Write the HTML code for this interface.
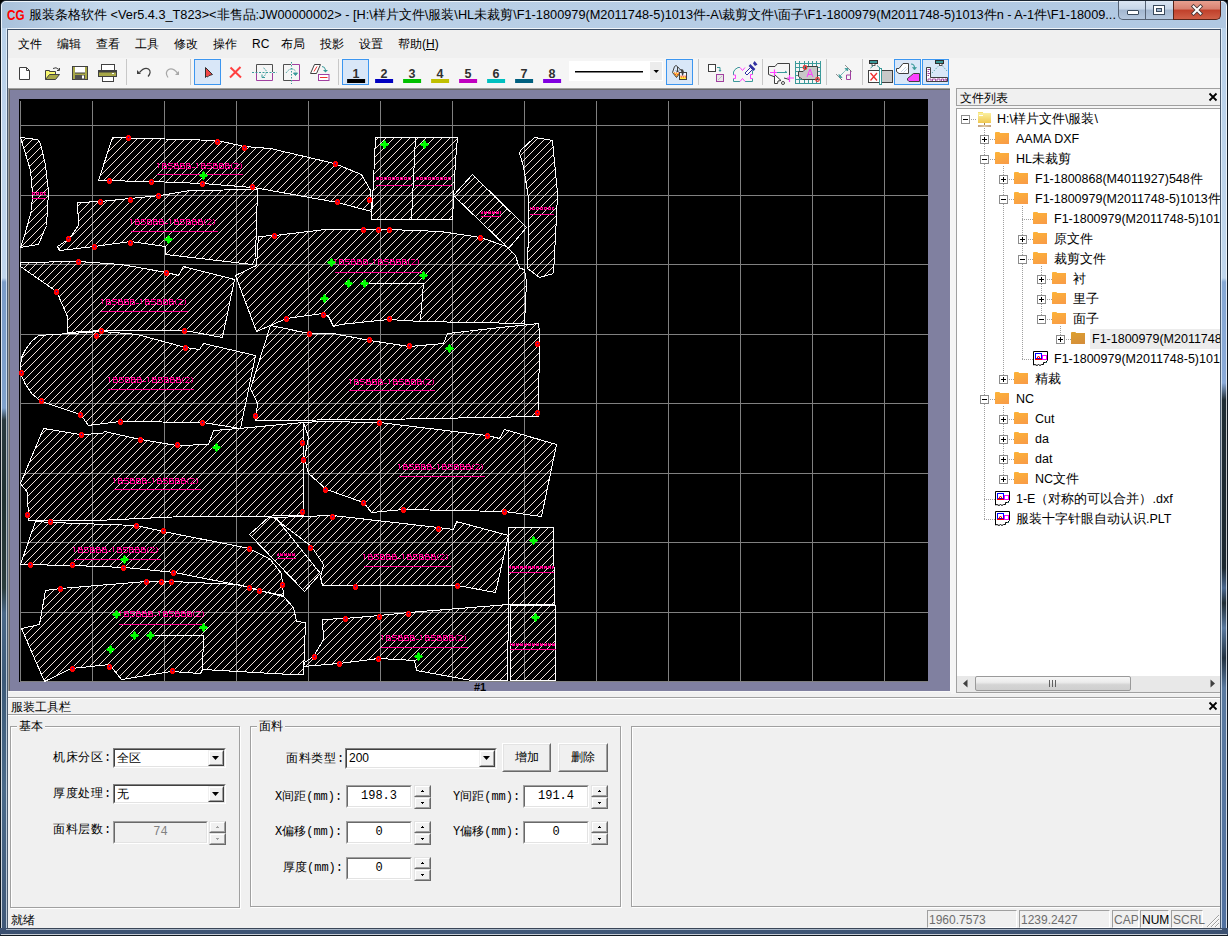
<!DOCTYPE html><html><head><meta charset="utf-8"><style>
*{box-sizing:border-box}
body{margin:0;width:1228px;height:936px;position:relative;overflow:hidden;font-family:"Liberation Sans",sans-serif;font-size:12px;color:#000;background:#000}
.a{position:absolute}
.t{position:absolute;white-space:nowrap;line-height:14px}
</style></head><body><div class="a" style="left:0;top:0;width:1228px;height:936px;background:linear-gradient(#b9d1ea 0px,#bcd3ea 30px,#9cb4cc 200px,#2f4a4a 400px,#405e78 700px,#3b5070 936px);border:1px solid #1a2430;border-radius:6px 6px 0 0"></div><div class="a" style="left:1px;top:1px;width:1226px;height:934px;border:1px solid rgba(255,255,255,0.75);border-radius:5px 5px 0 0"></div><div class="a" style="left:2px;top:2px;width:1224px;height:27px;background:linear-gradient(90deg,#a9c1db 0%,#c4d8ec 8%,#b9cfe6 40%,#b0c8e2 100%);border-radius:4px 4px 0 0"></div><div class="a" style="left:6px;top:28px;width:1216px;height:902px;border:1px solid rgba(255,255,255,0.8)"></div><div class="a" style="left:7px;top:29px;width:1214px;height:900px;border:1px solid #3c4e66"></div><div class="t" style="left:7px;top:7px;font-weight:bold;color:#f00;font-size:15px;line-height:16px;letter-spacing:0px;transform:scaleX(0.78);transform-origin:0 0">CG</div><div class="t" style="left:29px;top:8px;font-size:12.75px;color:#000;width:1092px;overflow:hidden">服装条格软件 &lt;Ver5.4.3_T823&gt;&lt;非售品:JW00000002&gt; - [H:\样片文件\服装\HL未裁剪\F1-1800979(M2011748-5)1013件-A\裁剪文件\面子\F1-1800979(M2011748-5)1013件n - A-1件\F1-18009...</div><div class="a" style="left:1118px;top:1px;width:56px;height:19px;border:1px solid #556274;border-top:none;border-radius:0 0 0 5px;background:linear-gradient(#dbe6f3 0,#c7d6e8 45%,#a3b7d0 50%,#b5c8de 100%)"></div><div class="a" style="left:1145px;top:1px;width:1px;height:18px;background:#556274"></div><div class="a" style="left:1127px;top:10px;width:12px;height:5px;background:#fff;border:1px solid #3a4a5c;border-radius:1px"></div><div class="a" style="left:1153px;top:5px;width:12px;height:10px;background:#fff;border:1px solid #3a4a5c"></div><div class="a" style="left:1156px;top:8px;width:6px;height:4px;background:#a3b7d0;border:1px solid #3a4a5c"></div><div class="a" style="left:1173px;top:1px;width:48px;height:19px;border:1px solid #5a2418;border-top:none;border-radius:0 0 5px 0;background:linear-gradient(#e8a090 0,#d88070 45%,#c0402a 50%,#d06048 100%)"></div><svg class="a" style="left:1190px;top:4px" width="14" height="12"><path d="M3.5 2.5 L10.5 9.5 M10.5 2.5 L3.5 9.5" stroke="#4a3a3a" stroke-width="3.8" stroke-linecap="square"/><path d="M3.5 2.5 L10.5 9.5 M10.5 2.5 L3.5 9.5" stroke="#fff" stroke-width="2" stroke-linecap="square"/></svg><div class="a" style="left:8px;top:30px;width:1212px;height:898px;background:#f0f0f0"></div><div class="t" style="left:18px;top:37px;font-size:12px">文件</div><div class="t" style="left:57px;top:37px;font-size:12px">编辑</div><div class="t" style="left:96px;top:37px;font-size:12px">查看</div><div class="t" style="left:135px;top:37px;font-size:12px">工具</div><div class="t" style="left:174px;top:37px;font-size:12px">修改</div><div class="t" style="left:213px;top:37px;font-size:12px">操作</div><div class="t" style="left:252px;top:37px;font-size:12px">RC</div><div class="t" style="left:281px;top:37px;font-size:12px">布局</div><div class="t" style="left:320px;top:37px;font-size:12px">投影</div><div class="t" style="left:359px;top:37px;font-size:12px">设置</div><div class="t" style="left:398px;top:37px;font-size:12px">帮助(<u>H</u>)</div><div class="a" style="left:8px;top:58px;width:1212px;height:30px;background:#f5f5f5"></div><svg class="a" style="left:0;top:0" width="960" height="90"><rect x="194.5" y="59.5" width="26" height="25" fill="#d9e7f8" stroke="#3c96f0" stroke-width="1"/><rect x="342.5" y="59.5" width="26" height="25" fill="#d9e7f8" stroke="#3c96f0" stroke-width="1"/><rect x="666.5" y="59.5" width="26" height="25" fill="#d9e7f8" stroke="#3c96f0" stroke-width="1"/><rect x="894.5" y="59.5" width="26" height="25" fill="#d9e7f8" stroke="#3c96f0" stroke-width="1"/><rect x="922.5" y="59.5" width="26" height="25" fill="#d9e7f8" stroke="#3c96f0" stroke-width="1"/><rect x="126" y="59" width="1" height="26" fill="#c8c8c8"/><rect x="190" y="59" width="1" height="26" fill="#c8c8c8"/><rect x="338" y="59" width="1" height="26" fill="#c8c8c8"/><rect x="698" y="59" width="1" height="26" fill="#c8c8c8"/><rect x="762" y="59" width="1" height="26" fill="#c8c8c8"/><rect x="826" y="59" width="1" height="26" fill="#c8c8c8"/><rect x="862" y="59" width="1" height="26" fill="#c8c8c8"/><path d="M19.5,67.5 H26.5 L29.5,70.5 V79.5 H19.5 Z" fill="#fff" stroke="#404040"/><path d="M26.5,67.5 V70.5 H29.5" fill="none" stroke="#404040"/><path d="M45.5,79.5 V70.5 H49.5 V71.5 H55.5 V74" fill="#f8f870" stroke="#404040"/><path d="M45.5,79.5 L49.5,74.5 H59.5 L55.5,79.5 Z" fill="#a8a848" stroke="#404040"/><path d="M53,68.5 Q56,66.5 59,69.5" fill="none" stroke="#404040"/><path d="M57,70.5 H59.5 V68" fill="none" stroke="#404040"/><rect x="72.5" y="66.5" width="15" height="13" fill="#a8a848" stroke="#404040"/><rect x="75" y="67" width="10" height="6" fill="#fff"/><rect x="75" y="72.5" width="10" height="1" fill="#404040"/><rect x="75" y="75" width="10" height="4.5" fill="#505050"/><rect x="82" y="75.5" width="2" height="3" fill="#fff"/><rect x="101.5" y="64.5" width="13" height="6" fill="#fff" stroke="#404040"/><rect x="98.5" y="70.5" width="18" height="6" fill="#a8a848" stroke="#404040"/><rect x="99" y="71" width="17" height="1.5" fill="#404040"/><rect x="112" y="73" width="2" height="1" fill="#fff"/><rect x="102.5" y="76.5" width="11" height="5" fill="#fff" stroke="#404040"/><path d="M139.5,72.5 Q144,67 148.5,69 Q152,72 148,76.5" fill="none" stroke="#404040" stroke-width="1.2"/><path d="M137,70 V74 H141 Z" fill="#404040"/><path d="M177.5,73 Q173,67.5 168.5,69.5 Q164.5,72.5 168,77.5" fill="none" stroke="#a8a8a8" stroke-width="1.2"/><path d="M179,71 V75 H175 Z" fill="#a8a8a8"/><path d="M205.5,67.5 L212.5,74.5 L209,75.5 L207.5,77 L206.5,76.5 L205.5,77.5 Z" fill="#f04848" stroke="#303030"/><path d="M230.5,67.5 L241,77.5 M240.5,67 L230,77.5" stroke="#ff4040" stroke-width="2"/><path d="M256.5,72 V64.5 H272.5 V72" fill="none" stroke="#505050"/><path d="M256.5,73 V80.5 H272.5 V73" fill="none" stroke="#a040a0"/><path d="M252,72.5 H277" stroke="#3a9a9a" stroke-dasharray="2,1.5"/><path d="M263.5,68 Q267,70 266,73 Q265,76 263,77" fill="none" stroke="#3a9a9a" stroke-dasharray="1.5,1"/><path d="M262,74.5 V77.5 H265" fill="none" stroke="#3a9a9a"/><path d="M291,64.5 H283.5 V80.5 H291" fill="none" stroke="#505050"/><path d="M292,64.5 H299.5 V80.5 H292" fill="none" stroke="#a040a0"/><path d="M291.5,62 V84" stroke="#3a9a9a" stroke-dasharray="1.5,1.5"/><path d="M286,73 Q291,66 295.5,71" fill="none" stroke="#3a9a9a" stroke-dasharray="1.5,1"/><path d="M293.5,73 H297.5 L295.5,75.5 Z" fill="#3a9a9a" stroke="#3a9a9a"/><path d="M314.5,64.5 H320.5 L316.5,73.5 H310.5 Z" fill="#fff" stroke="#404040"/><path d="M317,66.5 L314,71.5" stroke="#f03030"/><rect x="318.5" y="74.5" width="10.5" height="6" fill="#fff" stroke="#a040a0"/><rect x="320" y="77" width="7.5" height="1" fill="#f03030"/><path d="M322,66.5 Q325,66.5 325.5,70" fill="none" stroke="#3a9a9a"/><path d="M323,70 H328 L325.5,72.5 Z" fill="#3a9a9a"/><text x="356.1" y="77.5" text-anchor="middle" font-family="Liberation Sans" font-weight="bold" font-size="12.5" fill="#303030">1</text><rect x="347.1" y="79" width="18" height="4" fill="#000000"/><text x="384.1" y="77.5" text-anchor="middle" font-family="Liberation Sans" font-weight="bold" font-size="12.5" fill="#303030">2</text><rect x="375.1" y="79" width="18" height="4" fill="#0000c0"/><text x="412.1" y="77.5" text-anchor="middle" font-family="Liberation Sans" font-weight="bold" font-size="12.5" fill="#303030">3</text><rect x="403.1" y="79" width="18" height="4" fill="#00c000"/><text x="440.1" y="77.5" text-anchor="middle" font-family="Liberation Sans" font-weight="bold" font-size="12.5" fill="#303030">4</text><rect x="431.1" y="79" width="18" height="4" fill="#c0c000"/><text x="468.1" y="77.5" text-anchor="middle" font-family="Liberation Sans" font-weight="bold" font-size="12.5" fill="#303030">5</text><rect x="459.1" y="79" width="18" height="4" fill="#c000c0"/><text x="496.1" y="77.5" text-anchor="middle" font-family="Liberation Sans" font-weight="bold" font-size="12.5" fill="#303030">6</text><rect x="487.1" y="79" width="18" height="4" fill="#00c0c0"/><text x="524.1" y="77.5" text-anchor="middle" font-family="Liberation Sans" font-weight="bold" font-size="12.5" fill="#303030">7</text><rect x="515.1" y="79" width="18" height="4" fill="#006080"/><text x="552.1" y="77.5" text-anchor="middle" font-family="Liberation Sans" font-weight="bold" font-size="12.5" fill="#303030">8</text><rect x="543.1" y="79" width="18" height="4" fill="#8000e0"/><rect x="569" y="61" width="94" height="20" fill="#fff"/><rect x="575" y="71" width="68" height="1.5" fill="#000"/><rect x="650" y="62" width="12" height="18" fill="#ececec"/><path d="M653.5,70 H659 L656.25,73 Z" fill="#000"/><path d="M672.5,72.5 L680.5,73 L676.5,77.5 Z" fill="#ffe840"/><path d="M674,73 h1 M676,73 h1 M678,73 h1 M675,74.5 h1 M677,74.5 h1 M676,76 h1" stroke="#ff3030"/><path d="M672.5,72.5 L674.5,66.5 Q676,64.5 677.5,66.5 L680.5,70 M672.5,72.5 L676.5,77.5 L680,73" fill="none" stroke="#404040" stroke-width="1"/><path d="M677.5,67 V72 M676,70.5 L677.5,72 L679,70.5" fill="none" stroke="#404040"/><rect x="679.5" y="72.5" width="7" height="7" fill="#eef6ff" stroke="#404040"/><path d="M680,76.5 h6 v2.5 h-6 Z" fill="#ffe840"/><path d="M680.5,76 h1 M682.5,76 h1 M684.5,76 h1 M681,77 h1 M683,77 h1 M685,77 h1" stroke="#ff3030"/><path d="M680,69 L683,69.5 L684,72 L683,75.5 L682,75.5 L681.5,72 Z" fill="#404040"/><rect x="708.5" y="64.5" width="7" height="7" fill="#fff" stroke="#404040"/><path d="M717,67.5 H720 V71" fill="none" stroke="#3a9a9a"/><path d="M718.5,70 H721.5 L720,72 Z" fill="#3a9a9a"/><rect x="716.5" y="74.5" width="7" height="7" fill="#e8e8e8" stroke="#a040a0"/><path d="M718,80 L722,76" stroke="#c0c0c0"/><path d="M733.5,81.5 H740 M745,81.5 H752.5 V78.5 M752.5,74.5 V71 L750,68 M740,67.5 H738 L735,69.5 L733.5,72 V75 M733.5,78.5 V81.5" fill="none" stroke="#3a9a9a"/><path d="M740,67.5 L742.5,70.5 L745,67.5 M740,81.5 L742.5,78.5 L745,81.5 M733.5,75 H735.5 V78.5 H733.5 M752.5,74.5 H750.5 V78.5 H752.5" fill="none" stroke="#ff40ff"/><path d="M745,73 L750.5,67.5 L752.5,69.5 L747,75 Z" fill="#fff" stroke="#3030a0"/><path d="M749.5,65 L754.5,70" stroke="#3030a0" stroke-width="2.5"/><path d="M753,63.5 L754.5,61 L757.5,64.5 L755,66 Z" fill="#3030a0"/><path d="M777.5,63.5 H789.5 V79.5 L784,78 M777.5,63.5 L775,66.5 H768.5 V74.5 L775,77" fill="none" stroke="#404040"/><path d="M770,72.5 H787 M785,71 L787,72.5" fill="none" stroke="#3a9a9a"/><path d="M774.5,74.5 L781,80.5 L778,81 L777.5,83.5 L774.5,83.5 Z" fill="#fff" stroke="#404040"/><circle cx="783" cy="83" r="1.5" fill="#fff" stroke="#404040"/><path d="M770,72.5 H777 M774.5,69.5 V76 M787,78 H794 M789.5,75 V82" stroke="#ff40ff" stroke-width="1.2"/><rect x="795" y="61" width="1" height="23" fill="#3a9a9a"/><rect x="799" y="61" width="1" height="23" fill="#3a9a9a"/><rect x="804" y="61" width="1" height="23" fill="#3a9a9a"/><rect x="808" y="61" width="1" height="23" fill="#3a9a9a"/><rect x="812" y="61" width="1" height="23" fill="#3a9a9a"/><rect x="816" y="61" width="1" height="23" fill="#3a9a9a"/><rect x="820" y="61" width="1" height="23" fill="#3a9a9a"/><rect x="795" y="63" width="26" height="1" fill="#3a9a9a"/><rect x="795" y="67" width="26" height="1" fill="#3a9a9a"/><rect x="795" y="71" width="26" height="1" fill="#3a9a9a"/><rect x="795" y="75" width="26" height="1" fill="#3a9a9a"/><rect x="795" y="79" width="26" height="1" fill="#3a9a9a"/><rect x="795" y="83" width="26" height="1" fill="#3a9a9a"/><path d="M805.5,66.5 H817.5 V79.5 H802.5 L798.5,76.5 V71.5 H803 L805.5,69 Z" fill="#c8c8c8" stroke="#404040"/><path d="M807,77 L810,69 L813,77 M808,74.5 H812" fill="none" stroke="#ff40ff"/><circle cx="805" cy="67.5" r="1.8" fill="none" stroke="#f03030" stroke-width="1.2"/><circle cx="817.5" cy="79.5" r="1.8" fill="none" stroke="#f03030" stroke-width="1.2"/><path d="M836.5,74.5 L842,80 M845.5,65.5 L851.5,71.5" stroke="#303030" stroke-dasharray="1,0.6"/><path d="M840,76 L847,69" stroke="#3a9a9a" stroke-dasharray="1,0.6"/><path d="M839,74.5 L839.5,77.5 L842,77.5 Z M848,68.5 L845,68.5 L847.5,71 Z" fill="#3a9a9a" stroke="#3a9a9a" stroke-width="0.8"/><path d="M850.5,71 V79.5 H846.5 V75 H850.5" fill="none" stroke="#a040a0"/><rect x="869.5" y="60.5" width="8" height="3" fill="#3a9a9a" stroke="#303030"/><rect x="872" y="63.5" width="3" height="2" fill="#fff" stroke="#303030" stroke-width="0.8"/><path d="M870.5,68 L873.5,65.5 M877,65.5 L880,68" stroke="#3a9a9a"/><rect x="868.5" y="70.5" width="24" height="12" fill="#c8c8c8" stroke="#404040"/><rect x="869" y="71" width="10" height="11" fill="#fff"/><path d="M870.5,73 L877,80.5 M877,73 L870.5,80.5" stroke="#f03030" stroke-width="1.3"/><rect x="879.5" y="68.5" width="2" height="16" fill="#fff" stroke="#3a9a9a"/><path d="M896.5,68.5 H899 L903,63.5 H908.5 V73.5 H899 L896.5,71.5 Z" fill="#fff" stroke="#404040"/><path d="M901,72 L906,67 M903.5,72.5 L907.5,68.5" stroke="#c8d8e8"/><path d="M911,64 Q914.5,64 914.5,68" fill="none" stroke="#3a9a9a" stroke-width="1.1"/><path d="M912.5,67.5 H916.5 L914.5,70 Z" fill="#3a9a9a" stroke="#3a9a9a" stroke-width="0.6"/><path d="M907.5,78.5 L910.5,76 L913.5,73.5 H919.5 V81.5 H909 L907.5,80 Z" fill="#ff40ff" stroke="#404040"/><rect x="935.5" y="60.5" width="8" height="3" fill="#3a9a9a" stroke="#303030"/><rect x="939.5" y="63.5" width="2.5" height="2" fill="#fff" stroke="#303030" stroke-width="0.8"/><path d="M938,66.5 L932,73 M943,66.5 L947.5,71.5" stroke="#3a9a9a" stroke-dasharray="1,1.5"/><path d="M926.5,67.5 H930.5 V77.5 H947.5 V81.5 H926.5 Z" fill="#fff" stroke="#404040"/><path d="M927.5,69.5 H930 M927.5,71.5 H929 M927.5,73.5 H930 M927.5,75.5 H929" stroke="#a040a0"/><path d="M928,81 V79 H931 V81 M932.5,81 V79 H935.5 V81 M937,81 V79 H940 V81 M941.5,81 V79 H943.5 V81 M945,81 V79 H946.5 V81" fill="none" stroke="#a040a0" stroke-width="0.9"/></svg><div class="a" style="left:8px;top:88px;width:943px;height:604px;background:#8080a0;border-left:1px solid #a0a0a0;border-top:1px solid #a0a0a0"></div><div class="a" style="left:9px;top:89px;width:942px;height:603px;border-left:1px solid #696969;border-top:1px solid #696969"></div><div class="a" style="left:950px;top:88px;width:1px;height:604px;background:#f8f8f8"></div><div class="a" style="left:8px;top:691px;width:943px;height:1px;background:#f8f8f8"></div><svg class="a" style="left:0;top:0" width="1228" height="936" shape-rendering="auto"><defs><pattern id="h" width="8" height="8" patternUnits="userSpaceOnUse"><rect x="0" y="3" width="1" height="1" fill="#f2e2dc"/><rect x="1" y="2" width="1" height="1" fill="#f2e2dc"/><rect x="2" y="1" width="1" height="1" fill="#f2e2dc"/><rect x="3" y="0" width="1" height="1" fill="#f2e2dc"/><rect x="4" y="7" width="1" height="1" fill="#f2e2dc"/><rect x="5" y="6" width="1" height="1" fill="#f2e2dc"/><rect x="6" y="5" width="1" height="1" fill="#f2e2dc"/><rect x="7" y="4" width="1" height="1" fill="#f2e2dc"/></pattern><pattern id="sm" width="4" height="3" patternUnits="userSpaceOnUse"><rect x="0" y="0" width="3" height="1" fill="#ff0090"/><rect x="0" y="1" width="1" height="2" fill="#ff0090"/><rect x="2" y="1" width="1" height="1" fill="#ff0090"/><rect x="1" y="2" width="2" height="1" fill="#ff0090"/></pattern><clipPath id="cc"><rect x="19" y="99" width="909" height="583"/></clipPath></defs><rect x="19" y="99" width="909" height="583" fill="#000"/><g clip-path="url(#cc)"><rect x="20" y="101" width="1" height="581" fill="#808080"/><rect x="92" y="101" width="1" height="581" fill="#808080"/><rect x="164" y="101" width="1" height="581" fill="#808080"/><rect x="236" y="101" width="1" height="581" fill="#808080"/><rect x="308" y="101" width="1" height="581" fill="#808080"/><rect x="380" y="101" width="1" height="581" fill="#808080"/><rect x="452" y="101" width="1" height="581" fill="#808080"/><rect x="524" y="101" width="1" height="581" fill="#808080"/><rect x="596" y="101" width="1" height="581" fill="#808080"/><rect x="668" y="101" width="1" height="581" fill="#808080"/><rect x="740" y="101" width="1" height="581" fill="#808080"/><rect x="812" y="101" width="1" height="581" fill="#808080"/><rect x="884" y="101" width="1" height="581" fill="#808080"/><rect x="20" y="125" width="908" height="1" fill="#808080"/><rect x="20" y="195" width="908" height="1" fill="#808080"/><rect x="20" y="264" width="908" height="1" fill="#808080"/><rect x="20" y="334" width="908" height="1" fill="#808080"/><rect x="20" y="403" width="908" height="1" fill="#808080"/><rect x="20" y="473" width="908" height="1" fill="#808080"/><rect x="20" y="542" width="908" height="1" fill="#808080"/><rect x="20" y="612" width="908" height="1" fill="#808080"/><rect x="20" y="681" width="908" height="1" fill="#808080"/><polygon points="20.5,137.5 37.5,139.5 40.5,143.5 45.5,165.5 48.5,191.5 46.5,225.5 38.5,244.5 20.5,247.5 24.5,235.5 31.5,210.5 32.5,193.5 30.5,170.5 24.5,150.5" fill="url(#h)" stroke="#fff" stroke-width="1" shape-rendering="crispEdges"/><polygon points="112.5,137.5 217.5,140.5 244.5,146.5 270.5,148.5 334.5,163.5 361.5,174.5 370.5,190.5 371.5,211.5 337.5,202.5 270.5,190.5 252.5,187.5 202.5,183.5 151.5,181.5 98.5,180.5" fill="url(#h)" stroke="#fff" stroke-width="1" shape-rendering="crispEdges"/><polygon points="375.5,137.5 457.5,137.5 455.5,160.5 452.5,219.5 371.5,219.5 373.5,180.5" fill="url(#h)" stroke="#fff" stroke-width="1" shape-rendering="crispEdges"/><polygon points="472.5,174.5 526.5,227.5 508.5,248.5 453.5,195.5" fill="url(#h)" stroke="#fff" stroke-width="1" shape-rendering="crispEdges"/><polygon points="534.5,137.5 552.5,140.5 557.5,193.5 556.5,217.5 553.5,273.5 539.5,277.5 527.5,268.5 528.5,227.5 528.5,198.5 523.5,166.5 519.5,153.5 520.5,150.5" fill="url(#h)" stroke="#fff" stroke-width="1" shape-rendering="crispEdges"/><polygon points="258.5,236.5 274.5,235.5 325.5,229.5 388.5,229.5 440.5,231.5 480.5,237.5 506.5,246.5 515.5,255.5 518.5,265.5 520.5,268.5 524.5,269.5 526.5,282.5 524.5,323.5 420.5,321.5 388.5,319.5 340.5,324.5 333.5,326.5 328.5,316.5 322.5,313.5 286.5,318.5 256.5,331.5 235.5,275.5 256.5,265.5" fill="url(#h)" stroke="#fff" stroke-width="1" shape-rendering="crispEdges"/><polygon points="77.5,202.5 100.5,201.5 130.5,198.5 159.5,195.5 190.5,190.5 257.5,189.5 255.5,257.5 252.5,264.5 165.5,254.5 165.5,246.5 130.5,241.5 94.5,246.5 59.5,250.5 57.5,246.5 69.5,238.5 78.5,225.5" fill="url(#h)" stroke="#fff" stroke-width="1" shape-rendering="crispEdges"/><polygon points="20.5,262.5 78.5,261.5 121.5,264.5 166.5,272.5 178.5,275.5 183.5,266.5 234.5,279.5 222.5,337.5 184.5,330.5 101.5,330.5 67.5,332.5 67.5,316.5 56.5,291.5 20.5,266.5" fill="url(#h)" stroke="#fff" stroke-width="1" shape-rendering="crispEdges"/><polygon points="38.5,335.5 101.5,331.5 137.5,334.5 185.5,347.5 199.5,349.5 203.5,343.5 255.5,355.5 240.5,428.5 202.5,422.5 120.5,421.5 88.5,425.5 80.5,414.5 41.5,401.5 32.5,394.5 25.5,384.5 21.5,375.5 20.5,366.5 21.5,357.5 25.5,349.5 31.5,341.5" fill="url(#h)" stroke="#fff" stroke-width="1" shape-rendering="crispEdges"/><polygon points="270.5,325.5 309.5,333.5 333.5,333.5 369.5,340.5 409.5,346.5 443.5,343.5 447.5,333.5 500.5,327.5 538.5,323.5 539.5,332.5 538.5,416.5 379.5,419.5 255.5,420.5 257.5,403.5 250.5,388.5" fill="url(#h)" stroke="#fff" stroke-width="1" shape-rendering="crispEdges"/><polygon points="43.5,428.5 80.5,434.5 102.5,433.5 104.5,431.5 140.5,439.5 177.5,445.5 208.5,444.5 213.5,430.5 238.5,428.5 303.5,422.5 303.5,515.5 240.5,516.5 183.5,516.5 96.5,520.5 28.5,520.5 27.5,492.5 20.5,483.5" fill="url(#h)" stroke="#fff" stroke-width="1" shape-rendering="crispEdges"/><polygon points="303.5,422.5 320.5,421.5 379.5,422.5 487.5,435.5 499.5,438.5 504.5,429.5 556.5,444.5 541.5,516.5 504.5,511.5 403.5,509.5 371.5,512.5 363.5,502.5 326.5,489.5 308.5,473.5 304.5,458.5 308.5,437.5" fill="url(#h)" stroke="#fff" stroke-width="1" shape-rendering="crispEdges"/><polygon points="35.5,521.5 51.5,522.5 136.5,525.5 163.5,531.5 249.5,548.5 270.5,559.5 281.5,573.5 283.5,595.5 258.5,590.5 250.5,587.5 174.5,572.5 124.5,567.5 72.5,565.5 20.5,564.5" fill="url(#h)" stroke="#fff" stroke-width="1" shape-rendering="crispEdges"/><polygon points="268.5,517.5 275.5,517.5 320.5,573.5 304.5,591.5 249.5,534.5" fill="url(#h)" stroke="#fff" stroke-width="1" shape-rendering="crispEdges"/><polygon points="273.5,517.5 332.5,515.5 438.5,527.5 453.5,529.5 456.5,521.5 508.5,535.5 495.5,592.5 457.5,585.5 355.5,585.5 322.5,585.5 320.5,577.5 323.5,564.5 311.5,546.5" fill="url(#h)" stroke="#fff" stroke-width="1" shape-rendering="crispEdges"/><polygon points="508.5,527.5 553.5,527.5 554.5,604.5 508.5,604.5" fill="url(#h)" stroke="#fff" stroke-width="1" shape-rendering="crispEdges"/><polygon points="45.5,590.5 60.5,588.5 146.5,581.5 171.5,581.5 238.5,584.5 258.5,590.5 283.5,596.5 293.5,607.5 296.5,621.5 305.5,622.5 303.5,674.5 290.5,674.5 202.5,669.5 200.5,673.5 171.5,671.5 121.5,679.5 109.5,664.5 71.5,668.5 44.5,681.5 21.5,628.5 39.5,624.5" fill="url(#h)" stroke="#fff" stroke-width="1" shape-rendering="crispEdges"/><polygon points="322.5,619.5 344.5,618.5 379.5,615.5 408.5,612.5 508.5,604.5 507.5,680.5 471.5,680.5 416.5,670.5 414.5,660.5 378.5,658.5 339.5,663.5 303.5,666.5 304.5,662.5 313.5,656.5 323.5,639.5" fill="url(#h)" stroke="#fff" stroke-width="1" shape-rendering="crispEdges"/><polygon points="510.5,605.5 555.5,605.5 555.5,680.5 510.5,680.5" fill="url(#h)" stroke="#fff" stroke-width="1" shape-rendering="crispEdges"/><polyline points="415.5,137.5 411.5,219.5" fill="none" stroke="#fff" stroke-width="1" shape-rendering="crispEdges"/><polyline points="364.5,283.5 423.5,283.5 420.5,320.5" fill="none" stroke="#fff" stroke-width="1" shape-rendering="crispEdges"/><polyline points="150.5,635.5 203.5,635.5 202.5,669.5" fill="none" stroke="#fff" stroke-width="1" shape-rendering="crispEdges"/><polyline points="303.5,422.5 303.5,515.5" fill="none" stroke="#fff" stroke-width="1" shape-rendering="crispEdges"/><rect x="157" y="174" width="86" height="1" fill="#ff0090"/><path d="M157,163h2v1h-2zM158,164h1v1h-1zM158,165h1v1h-1zM158,166h1v1h-1zM158,167h1v1h-1zM162,163h4v1h-4zM162,164h1v1h-1zM165,164h1v1h-1zM162,165h5v1h-5zM162,166h1v1h-1zM166,166h1v1h-1zM162,167h1v1h-1zM166,167h1v1h-1zM162,168h5v1h-5zM168,163h5v1h-5zM168,164h1v1h-1zM168,165h4v1h-4zM172,166h1v1h-1zM172,167h1v1h-1zM168,168h4v1h-4zM174,163h4v1h-4zM174,164h1v1h-1zM177,164h1v1h-1zM174,165h5v1h-5zM174,166h1v1h-1zM178,166h1v1h-1zM174,167h1v1h-1zM178,167h1v1h-1zM174,168h5v1h-5zM180,163h4v1h-4zM180,164h1v1h-1zM183,164h1v1h-1zM180,165h5v1h-5zM180,166h1v1h-1zM184,166h1v1h-1zM180,167h1v1h-1zM184,167h1v1h-1zM180,168h5v1h-5zM186,163h4v1h-4zM186,164h1v1h-1zM189,164h1v1h-1zM186,165h5v1h-5zM186,166h1v1h-1zM190,166h1v1h-1zM186,167h1v1h-1zM190,167h1v1h-1zM186,168h5v1h-5zM192,167h3v1h-3zM196,163h2v1h-2zM197,164h1v1h-1zM197,165h1v1h-1zM197,166h1v1h-1zM197,167h1v1h-1zM201,163h4v1h-4zM201,164h1v1h-1zM204,164h1v1h-1zM201,165h5v1h-5zM201,166h1v1h-1zM205,166h1v1h-1zM201,167h1v1h-1zM205,167h1v1h-1zM201,168h5v1h-5zM207,163h5v1h-5zM207,164h1v1h-1zM207,165h4v1h-4zM211,166h1v1h-1zM211,167h1v1h-1zM207,168h4v1h-4zM213,163h4v1h-4zM213,164h1v1h-1zM216,164h1v1h-1zM213,165h5v1h-5zM213,166h1v1h-1zM217,166h1v1h-1zM213,167h1v1h-1zM217,167h1v1h-1zM213,168h5v1h-5zM219,163h4v1h-4zM219,164h1v1h-1zM222,164h1v1h-1zM219,165h5v1h-5zM219,166h1v1h-1zM223,166h1v1h-1zM219,167h1v1h-1zM223,167h1v1h-1zM219,168h5v1h-5zM225,163h4v1h-4zM225,164h1v1h-1zM228,164h1v1h-1zM225,165h5v1h-5zM225,166h1v1h-1zM229,166h1v1h-1zM225,167h1v1h-1zM229,167h1v1h-1zM225,168h5v1h-5zM232,163h1v1h-1zM231,164h1v1h-1zM231,165h1v1h-1zM231,166h1v1h-1zM231,167h1v1h-1zM232,168h1v1h-1zM234,163h4v1h-4zM238,164h1v1h-1zM237,165h1v1h-1zM236,166h1v1h-1zM235,167h1v1h-1zM234,168h5v1h-5zM240,163h1v1h-1zM241,164h1v1h-1zM241,165h1v1h-1zM241,166h1v1h-1zM241,167h1v1h-1zM240,168h1v1h-1z" fill="#ff0090"/><rect x="131" y="231" width="87" height="1" fill="#ff0090"/><path d="M130,219h2v1h-2zM131,220h1v1h-1zM131,221h1v1h-1zM131,222h1v1h-1zM131,223h1v1h-1zM135,219h4v1h-4zM135,220h1v1h-1zM138,220h1v1h-1zM135,221h5v1h-5zM135,222h1v1h-1zM139,222h1v1h-1zM135,223h1v1h-1zM139,223h1v1h-1zM135,224h5v1h-5zM141,219h5v1h-5zM141,220h1v1h-1zM141,221h4v1h-4zM145,222h1v1h-1zM145,223h1v1h-1zM141,224h4v1h-4zM147,219h4v1h-4zM147,220h1v1h-1zM150,220h1v1h-1zM147,221h5v1h-5zM147,222h1v1h-1zM151,222h1v1h-1zM147,223h1v1h-1zM151,223h1v1h-1zM147,224h5v1h-5zM153,219h4v1h-4zM153,220h1v1h-1zM156,220h1v1h-1zM153,221h5v1h-5zM153,222h1v1h-1zM157,222h1v1h-1zM153,223h1v1h-1zM157,223h1v1h-1zM153,224h5v1h-5zM159,219h4v1h-4zM159,220h1v1h-1zM162,220h1v1h-1zM159,221h5v1h-5zM159,222h1v1h-1zM163,222h1v1h-1zM159,223h1v1h-1zM163,223h1v1h-1zM159,224h5v1h-5zM165,223h3v1h-3zM169,219h2v1h-2zM170,220h1v1h-1zM170,221h1v1h-1zM170,222h1v1h-1zM170,223h1v1h-1zM174,219h4v1h-4zM174,220h1v1h-1zM177,220h1v1h-1zM174,221h5v1h-5zM174,222h1v1h-1zM178,222h1v1h-1zM174,223h1v1h-1zM178,223h1v1h-1zM174,224h5v1h-5zM180,219h5v1h-5zM180,220h1v1h-1zM180,221h4v1h-4zM184,222h1v1h-1zM184,223h1v1h-1zM180,224h4v1h-4zM186,219h4v1h-4zM186,220h1v1h-1zM189,220h1v1h-1zM186,221h5v1h-5zM186,222h1v1h-1zM190,222h1v1h-1zM186,223h1v1h-1zM190,223h1v1h-1zM186,224h5v1h-5zM192,219h4v1h-4zM192,220h1v1h-1zM195,220h1v1h-1zM192,221h5v1h-5zM192,222h1v1h-1zM196,222h1v1h-1zM192,223h1v1h-1zM196,223h1v1h-1zM192,224h5v1h-5zM198,219h4v1h-4zM198,220h1v1h-1zM201,220h1v1h-1zM198,221h5v1h-5zM198,222h1v1h-1zM202,222h1v1h-1zM198,223h1v1h-1zM202,223h1v1h-1zM198,224h5v1h-5zM205,219h1v1h-1zM204,220h1v1h-1zM204,221h1v1h-1zM204,222h1v1h-1zM204,223h1v1h-1zM205,224h1v1h-1zM207,219h4v1h-4zM211,220h1v1h-1zM210,221h1v1h-1zM209,222h1v1h-1zM208,223h1v1h-1zM207,224h5v1h-5zM213,219h1v1h-1zM214,220h1v1h-1zM214,221h1v1h-1zM214,222h1v1h-1zM214,223h1v1h-1zM213,224h1v1h-1z" fill="#ff0090"/><rect x="101" y="311" width="87" height="1" fill="#ff0090"/><path d="M101,299h2v1h-2zM102,300h1v1h-1zM102,301h1v1h-1zM102,302h1v1h-1zM102,303h1v1h-1zM106,299h4v1h-4zM106,300h1v1h-1zM109,300h1v1h-1zM106,301h5v1h-5zM106,302h1v1h-1zM110,302h1v1h-1zM106,303h1v1h-1zM110,303h1v1h-1zM106,304h5v1h-5zM112,299h5v1h-5zM112,300h1v1h-1zM112,301h4v1h-4zM116,302h1v1h-1zM116,303h1v1h-1zM112,304h4v1h-4zM118,299h4v1h-4zM118,300h1v1h-1zM121,300h1v1h-1zM118,301h5v1h-5zM118,302h1v1h-1zM122,302h1v1h-1zM118,303h1v1h-1zM122,303h1v1h-1zM118,304h5v1h-5zM124,299h4v1h-4zM124,300h1v1h-1zM127,300h1v1h-1zM124,301h5v1h-5zM124,302h1v1h-1zM128,302h1v1h-1zM124,303h1v1h-1zM128,303h1v1h-1zM124,304h5v1h-5zM130,299h4v1h-4zM130,300h1v1h-1zM133,300h1v1h-1zM130,301h5v1h-5zM130,302h1v1h-1zM134,302h1v1h-1zM130,303h1v1h-1zM134,303h1v1h-1zM130,304h5v1h-5zM136,303h3v1h-3zM140,299h2v1h-2zM141,300h1v1h-1zM141,301h1v1h-1zM141,302h1v1h-1zM141,303h1v1h-1zM145,299h4v1h-4zM145,300h1v1h-1zM148,300h1v1h-1zM145,301h5v1h-5zM145,302h1v1h-1zM149,302h1v1h-1zM145,303h1v1h-1zM149,303h1v1h-1zM145,304h5v1h-5zM151,299h5v1h-5zM151,300h1v1h-1zM151,301h4v1h-4zM155,302h1v1h-1zM155,303h1v1h-1zM151,304h4v1h-4zM157,299h4v1h-4zM157,300h1v1h-1zM160,300h1v1h-1zM157,301h5v1h-5zM157,302h1v1h-1zM161,302h1v1h-1zM157,303h1v1h-1zM161,303h1v1h-1zM157,304h5v1h-5zM163,299h4v1h-4zM163,300h1v1h-1zM166,300h1v1h-1zM163,301h5v1h-5zM163,302h1v1h-1zM167,302h1v1h-1zM163,303h1v1h-1zM167,303h1v1h-1zM163,304h5v1h-5zM169,299h4v1h-4zM169,300h1v1h-1zM172,300h1v1h-1zM169,301h5v1h-5zM169,302h1v1h-1zM173,302h1v1h-1zM169,303h1v1h-1zM173,303h1v1h-1zM169,304h5v1h-5zM176,299h1v1h-1zM175,300h1v1h-1zM175,301h1v1h-1zM175,302h1v1h-1zM175,303h1v1h-1zM176,304h1v1h-1zM178,299h4v1h-4zM182,300h1v1h-1zM181,301h1v1h-1zM180,302h1v1h-1zM179,303h1v1h-1zM178,304h5v1h-5zM184,299h1v1h-1zM185,300h1v1h-1zM185,301h1v1h-1zM185,302h1v1h-1zM185,303h1v1h-1zM184,304h1v1h-1z" fill="#ff0090"/><rect x="335" y="272" width="87" height="1" fill="#ff0090"/><path d="M334,259h2v1h-2zM335,260h1v1h-1zM335,261h1v1h-1zM335,262h1v1h-1zM335,263h1v1h-1zM339,259h4v1h-4zM339,260h1v1h-1zM342,260h1v1h-1zM339,261h5v1h-5zM339,262h1v1h-1zM343,262h1v1h-1zM339,263h1v1h-1zM343,263h1v1h-1zM339,264h5v1h-5zM345,259h5v1h-5zM345,260h1v1h-1zM345,261h4v1h-4zM349,262h1v1h-1zM349,263h1v1h-1zM345,264h4v1h-4zM351,259h4v1h-4zM351,260h1v1h-1zM354,260h1v1h-1zM351,261h5v1h-5zM351,262h1v1h-1zM355,262h1v1h-1zM351,263h1v1h-1zM355,263h1v1h-1zM351,264h5v1h-5zM357,259h4v1h-4zM357,260h1v1h-1zM360,260h1v1h-1zM357,261h5v1h-5zM357,262h1v1h-1zM361,262h1v1h-1zM357,263h1v1h-1zM361,263h1v1h-1zM357,264h5v1h-5zM363,259h4v1h-4zM363,260h1v1h-1zM366,260h1v1h-1zM363,261h5v1h-5zM363,262h1v1h-1zM367,262h1v1h-1zM363,263h1v1h-1zM367,263h1v1h-1zM363,264h5v1h-5zM369,263h3v1h-3zM373,259h2v1h-2zM374,260h1v1h-1zM374,261h1v1h-1zM374,262h1v1h-1zM374,263h1v1h-1zM378,259h4v1h-4zM378,260h1v1h-1zM381,260h1v1h-1zM378,261h5v1h-5zM378,262h1v1h-1zM382,262h1v1h-1zM378,263h1v1h-1zM382,263h1v1h-1zM378,264h5v1h-5zM384,259h5v1h-5zM384,260h1v1h-1zM384,261h4v1h-4zM388,262h1v1h-1zM388,263h1v1h-1zM384,264h4v1h-4zM390,259h4v1h-4zM390,260h1v1h-1zM393,260h1v1h-1zM390,261h5v1h-5zM390,262h1v1h-1zM394,262h1v1h-1zM390,263h1v1h-1zM394,263h1v1h-1zM390,264h5v1h-5zM396,259h4v1h-4zM396,260h1v1h-1zM399,260h1v1h-1zM396,261h5v1h-5zM396,262h1v1h-1zM400,262h1v1h-1zM396,263h1v1h-1zM400,263h1v1h-1zM396,264h5v1h-5zM402,259h4v1h-4zM402,260h1v1h-1zM405,260h1v1h-1zM402,261h5v1h-5zM402,262h1v1h-1zM406,262h1v1h-1zM402,263h1v1h-1zM406,263h1v1h-1zM402,264h5v1h-5zM409,259h1v1h-1zM408,260h1v1h-1zM408,261h1v1h-1zM408,262h1v1h-1zM408,263h1v1h-1zM409,264h1v1h-1zM411,259h4v1h-4zM415,260h1v1h-1zM414,261h1v1h-1zM413,262h1v1h-1zM412,263h1v1h-1zM411,264h5v1h-5zM417,259h1v1h-1zM418,260h1v1h-1zM418,261h1v1h-1zM418,262h1v1h-1zM418,263h1v1h-1zM417,264h1v1h-1z" fill="#ff0090"/><rect x="108" y="389" width="86" height="1" fill="#ff0090"/><path d="M108,377h2v1h-2zM109,378h1v1h-1zM109,379h1v1h-1zM109,380h1v1h-1zM109,381h1v1h-1zM113,377h4v1h-4zM113,378h1v1h-1zM116,378h1v1h-1zM113,379h5v1h-5zM113,380h1v1h-1zM117,380h1v1h-1zM113,381h1v1h-1zM117,381h1v1h-1zM113,382h5v1h-5zM119,377h5v1h-5zM119,378h1v1h-1zM119,379h4v1h-4zM123,380h1v1h-1zM123,381h1v1h-1zM119,382h4v1h-4zM125,377h4v1h-4zM125,378h1v1h-1zM128,378h1v1h-1zM125,379h5v1h-5zM125,380h1v1h-1zM129,380h1v1h-1zM125,381h1v1h-1zM129,381h1v1h-1zM125,382h5v1h-5zM131,377h4v1h-4zM131,378h1v1h-1zM134,378h1v1h-1zM131,379h5v1h-5zM131,380h1v1h-1zM135,380h1v1h-1zM131,381h1v1h-1zM135,381h1v1h-1zM131,382h5v1h-5zM137,377h4v1h-4zM137,378h1v1h-1zM140,378h1v1h-1zM137,379h5v1h-5zM137,380h1v1h-1zM141,380h1v1h-1zM137,381h1v1h-1zM141,381h1v1h-1zM137,382h5v1h-5zM143,381h3v1h-3zM147,377h2v1h-2zM148,378h1v1h-1zM148,379h1v1h-1zM148,380h1v1h-1zM148,381h1v1h-1zM152,377h4v1h-4zM152,378h1v1h-1zM155,378h1v1h-1zM152,379h5v1h-5zM152,380h1v1h-1zM156,380h1v1h-1zM152,381h1v1h-1zM156,381h1v1h-1zM152,382h5v1h-5zM158,377h5v1h-5zM158,378h1v1h-1zM158,379h4v1h-4zM162,380h1v1h-1zM162,381h1v1h-1zM158,382h4v1h-4zM164,377h4v1h-4zM164,378h1v1h-1zM167,378h1v1h-1zM164,379h5v1h-5zM164,380h1v1h-1zM168,380h1v1h-1zM164,381h1v1h-1zM168,381h1v1h-1zM164,382h5v1h-5zM170,377h4v1h-4zM170,378h1v1h-1zM173,378h1v1h-1zM170,379h5v1h-5zM170,380h1v1h-1zM174,380h1v1h-1zM170,381h1v1h-1zM174,381h1v1h-1zM170,382h5v1h-5zM176,377h4v1h-4zM176,378h1v1h-1zM179,378h1v1h-1zM176,379h5v1h-5zM176,380h1v1h-1zM180,380h1v1h-1zM176,381h1v1h-1zM180,381h1v1h-1zM176,382h5v1h-5zM183,377h1v1h-1zM182,378h1v1h-1zM182,379h1v1h-1zM182,380h1v1h-1zM182,381h1v1h-1zM183,382h1v1h-1zM185,377h4v1h-4zM189,378h1v1h-1zM188,379h1v1h-1zM187,380h1v1h-1zM186,381h1v1h-1zM185,382h5v1h-5zM191,377h1v1h-1zM192,378h1v1h-1zM192,379h1v1h-1zM192,380h1v1h-1zM192,381h1v1h-1zM191,382h1v1h-1z" fill="#ff0090"/><rect x="349" y="390" width="86" height="1" fill="#ff0090"/><path d="M349,379h2v1h-2zM350,380h1v1h-1zM350,381h1v1h-1zM350,382h1v1h-1zM350,383h1v1h-1zM354,379h4v1h-4zM354,380h1v1h-1zM357,380h1v1h-1zM354,381h5v1h-5zM354,382h1v1h-1zM358,382h1v1h-1zM354,383h1v1h-1zM358,383h1v1h-1zM354,384h5v1h-5zM360,379h5v1h-5zM360,380h1v1h-1zM360,381h4v1h-4zM364,382h1v1h-1zM364,383h1v1h-1zM360,384h4v1h-4zM366,379h4v1h-4zM366,380h1v1h-1zM369,380h1v1h-1zM366,381h5v1h-5zM366,382h1v1h-1zM370,382h1v1h-1zM366,383h1v1h-1zM370,383h1v1h-1zM366,384h5v1h-5zM372,379h4v1h-4zM372,380h1v1h-1zM375,380h1v1h-1zM372,381h5v1h-5zM372,382h1v1h-1zM376,382h1v1h-1zM372,383h1v1h-1zM376,383h1v1h-1zM372,384h5v1h-5zM378,379h4v1h-4zM378,380h1v1h-1zM381,380h1v1h-1zM378,381h5v1h-5zM378,382h1v1h-1zM382,382h1v1h-1zM378,383h1v1h-1zM382,383h1v1h-1zM378,384h5v1h-5zM384,383h3v1h-3zM388,379h2v1h-2zM389,380h1v1h-1zM389,381h1v1h-1zM389,382h1v1h-1zM389,383h1v1h-1zM393,379h4v1h-4zM393,380h1v1h-1zM396,380h1v1h-1zM393,381h5v1h-5zM393,382h1v1h-1zM397,382h1v1h-1zM393,383h1v1h-1zM397,383h1v1h-1zM393,384h5v1h-5zM399,379h5v1h-5zM399,380h1v1h-1zM399,381h4v1h-4zM403,382h1v1h-1zM403,383h1v1h-1zM399,384h4v1h-4zM405,379h4v1h-4zM405,380h1v1h-1zM408,380h1v1h-1zM405,381h5v1h-5zM405,382h1v1h-1zM409,382h1v1h-1zM405,383h1v1h-1zM409,383h1v1h-1zM405,384h5v1h-5zM411,379h4v1h-4zM411,380h1v1h-1zM414,380h1v1h-1zM411,381h5v1h-5zM411,382h1v1h-1zM415,382h1v1h-1zM411,383h1v1h-1zM415,383h1v1h-1zM411,384h5v1h-5zM417,379h4v1h-4zM417,380h1v1h-1zM420,380h1v1h-1zM417,381h5v1h-5zM417,382h1v1h-1zM421,382h1v1h-1zM417,383h1v1h-1zM421,383h1v1h-1zM417,384h5v1h-5zM424,379h1v1h-1zM423,380h1v1h-1zM423,381h1v1h-1zM423,382h1v1h-1zM423,383h1v1h-1zM424,384h1v1h-1zM426,379h4v1h-4zM430,380h1v1h-1zM429,381h1v1h-1zM428,382h1v1h-1zM427,383h1v1h-1zM426,384h5v1h-5zM432,379h1v1h-1zM433,380h1v1h-1zM433,381h1v1h-1zM433,382h1v1h-1zM433,383h1v1h-1zM432,384h1v1h-1z" fill="#ff0090"/><rect x="114" y="489" width="87" height="1" fill="#ff0090"/><path d="M113,478h2v1h-2zM114,479h1v1h-1zM114,480h1v1h-1zM114,481h1v1h-1zM114,482h1v1h-1zM118,478h4v1h-4zM118,479h1v1h-1zM121,479h1v1h-1zM118,480h5v1h-5zM118,481h1v1h-1zM122,481h1v1h-1zM118,482h1v1h-1zM122,482h1v1h-1zM118,483h5v1h-5zM124,478h5v1h-5zM124,479h1v1h-1zM124,480h4v1h-4zM128,481h1v1h-1zM128,482h1v1h-1zM124,483h4v1h-4zM130,478h4v1h-4zM130,479h1v1h-1zM133,479h1v1h-1zM130,480h5v1h-5zM130,481h1v1h-1zM134,481h1v1h-1zM130,482h1v1h-1zM134,482h1v1h-1zM130,483h5v1h-5zM136,478h4v1h-4zM136,479h1v1h-1zM139,479h1v1h-1zM136,480h5v1h-5zM136,481h1v1h-1zM140,481h1v1h-1zM136,482h1v1h-1zM140,482h1v1h-1zM136,483h5v1h-5zM142,478h4v1h-4zM142,479h1v1h-1zM145,479h1v1h-1zM142,480h5v1h-5zM142,481h1v1h-1zM146,481h1v1h-1zM142,482h1v1h-1zM146,482h1v1h-1zM142,483h5v1h-5zM148,482h3v1h-3zM152,478h2v1h-2zM153,479h1v1h-1zM153,480h1v1h-1zM153,481h1v1h-1zM153,482h1v1h-1zM157,478h4v1h-4zM157,479h1v1h-1zM160,479h1v1h-1zM157,480h5v1h-5zM157,481h1v1h-1zM161,481h1v1h-1zM157,482h1v1h-1zM161,482h1v1h-1zM157,483h5v1h-5zM163,478h5v1h-5zM163,479h1v1h-1zM163,480h4v1h-4zM167,481h1v1h-1zM167,482h1v1h-1zM163,483h4v1h-4zM169,478h4v1h-4zM169,479h1v1h-1zM172,479h1v1h-1zM169,480h5v1h-5zM169,481h1v1h-1zM173,481h1v1h-1zM169,482h1v1h-1zM173,482h1v1h-1zM169,483h5v1h-5zM175,478h4v1h-4zM175,479h1v1h-1zM178,479h1v1h-1zM175,480h5v1h-5zM175,481h1v1h-1zM179,481h1v1h-1zM175,482h1v1h-1zM179,482h1v1h-1zM175,483h5v1h-5zM181,478h4v1h-4zM181,479h1v1h-1zM184,479h1v1h-1zM181,480h5v1h-5zM181,481h1v1h-1zM185,481h1v1h-1zM181,482h1v1h-1zM185,482h1v1h-1zM181,483h5v1h-5zM188,478h1v1h-1zM187,479h1v1h-1zM187,480h1v1h-1zM187,481h1v1h-1zM187,482h1v1h-1zM188,483h1v1h-1zM190,478h4v1h-4zM194,479h1v1h-1zM193,480h1v1h-1zM192,481h1v1h-1zM191,482h1v1h-1zM190,483h5v1h-5zM196,478h1v1h-1zM197,479h1v1h-1zM197,480h1v1h-1zM197,481h1v1h-1zM197,482h1v1h-1zM196,483h1v1h-1z" fill="#ff0090"/><rect x="399" y="476" width="86" height="1" fill="#ff0090"/><path d="M398,464h2v1h-2zM399,465h1v1h-1zM399,466h1v1h-1zM399,467h1v1h-1zM399,468h1v1h-1zM403,464h4v1h-4zM403,465h1v1h-1zM406,465h1v1h-1zM403,466h5v1h-5zM403,467h1v1h-1zM407,467h1v1h-1zM403,468h1v1h-1zM407,468h1v1h-1zM403,469h5v1h-5zM409,464h5v1h-5zM409,465h1v1h-1zM409,466h4v1h-4zM413,467h1v1h-1zM413,468h1v1h-1zM409,469h4v1h-4zM415,464h4v1h-4zM415,465h1v1h-1zM418,465h1v1h-1zM415,466h5v1h-5zM415,467h1v1h-1zM419,467h1v1h-1zM415,468h1v1h-1zM419,468h1v1h-1zM415,469h5v1h-5zM421,464h4v1h-4zM421,465h1v1h-1zM424,465h1v1h-1zM421,466h5v1h-5zM421,467h1v1h-1zM425,467h1v1h-1zM421,468h1v1h-1zM425,468h1v1h-1zM421,469h5v1h-5zM427,464h4v1h-4zM427,465h1v1h-1zM430,465h1v1h-1zM427,466h5v1h-5zM427,467h1v1h-1zM431,467h1v1h-1zM427,468h1v1h-1zM431,468h1v1h-1zM427,469h5v1h-5zM433,468h3v1h-3zM437,464h2v1h-2zM438,465h1v1h-1zM438,466h1v1h-1zM438,467h1v1h-1zM438,468h1v1h-1zM442,464h4v1h-4zM442,465h1v1h-1zM445,465h1v1h-1zM442,466h5v1h-5zM442,467h1v1h-1zM446,467h1v1h-1zM442,468h1v1h-1zM446,468h1v1h-1zM442,469h5v1h-5zM448,464h5v1h-5zM448,465h1v1h-1zM448,466h4v1h-4zM452,467h1v1h-1zM452,468h1v1h-1zM448,469h4v1h-4zM454,464h4v1h-4zM454,465h1v1h-1zM457,465h1v1h-1zM454,466h5v1h-5zM454,467h1v1h-1zM458,467h1v1h-1zM454,468h1v1h-1zM458,468h1v1h-1zM454,469h5v1h-5zM460,464h4v1h-4zM460,465h1v1h-1zM463,465h1v1h-1zM460,466h5v1h-5zM460,467h1v1h-1zM464,467h1v1h-1zM460,468h1v1h-1zM464,468h1v1h-1zM460,469h5v1h-5zM466,464h4v1h-4zM466,465h1v1h-1zM469,465h1v1h-1zM466,466h5v1h-5zM466,467h1v1h-1zM470,467h1v1h-1zM466,468h1v1h-1zM470,468h1v1h-1zM466,469h5v1h-5zM473,464h1v1h-1zM472,465h1v1h-1zM472,466h1v1h-1zM472,467h1v1h-1zM472,468h1v1h-1zM473,469h1v1h-1zM475,464h4v1h-4zM479,465h1v1h-1zM478,466h1v1h-1zM477,467h1v1h-1zM476,468h1v1h-1zM475,469h5v1h-5zM481,464h1v1h-1zM482,465h1v1h-1zM482,466h1v1h-1zM482,467h1v1h-1zM482,468h1v1h-1zM481,469h1v1h-1z" fill="#ff0090"/><rect x="74" y="559" width="87" height="1" fill="#ff0090"/><path d="M73,547h2v1h-2zM74,548h1v1h-1zM74,549h1v1h-1zM74,550h1v1h-1zM74,551h1v1h-1zM78,547h4v1h-4zM78,548h1v1h-1zM81,548h1v1h-1zM78,549h5v1h-5zM78,550h1v1h-1zM82,550h1v1h-1zM78,551h1v1h-1zM82,551h1v1h-1zM78,552h5v1h-5zM84,547h5v1h-5zM84,548h1v1h-1zM84,549h4v1h-4zM88,550h1v1h-1zM88,551h1v1h-1zM84,552h4v1h-4zM90,547h4v1h-4zM90,548h1v1h-1zM93,548h1v1h-1zM90,549h5v1h-5zM90,550h1v1h-1zM94,550h1v1h-1zM90,551h1v1h-1zM94,551h1v1h-1zM90,552h5v1h-5zM96,547h4v1h-4zM96,548h1v1h-1zM99,548h1v1h-1zM96,549h5v1h-5zM96,550h1v1h-1zM100,550h1v1h-1zM96,551h1v1h-1zM100,551h1v1h-1zM96,552h5v1h-5zM102,547h4v1h-4zM102,548h1v1h-1zM105,548h1v1h-1zM102,549h5v1h-5zM102,550h1v1h-1zM106,550h1v1h-1zM102,551h1v1h-1zM106,551h1v1h-1zM102,552h5v1h-5zM108,551h3v1h-3zM112,547h2v1h-2zM113,548h1v1h-1zM113,549h1v1h-1zM113,550h1v1h-1zM113,551h1v1h-1zM117,547h4v1h-4zM117,548h1v1h-1zM120,548h1v1h-1zM117,549h5v1h-5zM117,550h1v1h-1zM121,550h1v1h-1zM117,551h1v1h-1zM121,551h1v1h-1zM117,552h5v1h-5zM123,547h5v1h-5zM123,548h1v1h-1zM123,549h4v1h-4zM127,550h1v1h-1zM127,551h1v1h-1zM123,552h4v1h-4zM129,547h4v1h-4zM129,548h1v1h-1zM132,548h1v1h-1zM129,549h5v1h-5zM129,550h1v1h-1zM133,550h1v1h-1zM129,551h1v1h-1zM133,551h1v1h-1zM129,552h5v1h-5zM135,547h4v1h-4zM135,548h1v1h-1zM138,548h1v1h-1zM135,549h5v1h-5zM135,550h1v1h-1zM139,550h1v1h-1zM135,551h1v1h-1zM139,551h1v1h-1zM135,552h5v1h-5zM141,547h4v1h-4zM141,548h1v1h-1zM144,548h1v1h-1zM141,549h5v1h-5zM141,550h1v1h-1zM145,550h1v1h-1zM141,551h1v1h-1zM145,551h1v1h-1zM141,552h5v1h-5zM148,547h1v1h-1zM147,548h1v1h-1zM147,549h1v1h-1zM147,550h1v1h-1zM147,551h1v1h-1zM148,552h1v1h-1zM150,547h4v1h-4zM154,548h1v1h-1zM153,549h1v1h-1zM152,550h1v1h-1zM151,551h1v1h-1zM150,552h5v1h-5zM156,547h1v1h-1zM157,548h1v1h-1zM157,549h1v1h-1zM157,550h1v1h-1zM157,551h1v1h-1zM156,552h1v1h-1z" fill="#ff0090"/><rect x="364" y="566" width="87" height="1" fill="#ff0090"/><path d="M363,554h2v1h-2zM364,555h1v1h-1zM364,556h1v1h-1zM364,557h1v1h-1zM364,558h1v1h-1zM368,554h4v1h-4zM368,555h1v1h-1zM371,555h1v1h-1zM368,556h5v1h-5zM368,557h1v1h-1zM372,557h1v1h-1zM368,558h1v1h-1zM372,558h1v1h-1zM368,559h5v1h-5zM374,554h5v1h-5zM374,555h1v1h-1zM374,556h4v1h-4zM378,557h1v1h-1zM378,558h1v1h-1zM374,559h4v1h-4zM380,554h4v1h-4zM380,555h1v1h-1zM383,555h1v1h-1zM380,556h5v1h-5zM380,557h1v1h-1zM384,557h1v1h-1zM380,558h1v1h-1zM384,558h1v1h-1zM380,559h5v1h-5zM386,554h4v1h-4zM386,555h1v1h-1zM389,555h1v1h-1zM386,556h5v1h-5zM386,557h1v1h-1zM390,557h1v1h-1zM386,558h1v1h-1zM390,558h1v1h-1zM386,559h5v1h-5zM392,554h4v1h-4zM392,555h1v1h-1zM395,555h1v1h-1zM392,556h5v1h-5zM392,557h1v1h-1zM396,557h1v1h-1zM392,558h1v1h-1zM396,558h1v1h-1zM392,559h5v1h-5zM398,558h3v1h-3zM402,554h2v1h-2zM403,555h1v1h-1zM403,556h1v1h-1zM403,557h1v1h-1zM403,558h1v1h-1zM407,554h4v1h-4zM407,555h1v1h-1zM410,555h1v1h-1zM407,556h5v1h-5zM407,557h1v1h-1zM411,557h1v1h-1zM407,558h1v1h-1zM411,558h1v1h-1zM407,559h5v1h-5zM413,554h5v1h-5zM413,555h1v1h-1zM413,556h4v1h-4zM417,557h1v1h-1zM417,558h1v1h-1zM413,559h4v1h-4zM419,554h4v1h-4zM419,555h1v1h-1zM422,555h1v1h-1zM419,556h5v1h-5zM419,557h1v1h-1zM423,557h1v1h-1zM419,558h1v1h-1zM423,558h1v1h-1zM419,559h5v1h-5zM425,554h4v1h-4zM425,555h1v1h-1zM428,555h1v1h-1zM425,556h5v1h-5zM425,557h1v1h-1zM429,557h1v1h-1zM425,558h1v1h-1zM429,558h1v1h-1zM425,559h5v1h-5zM431,554h4v1h-4zM431,555h1v1h-1zM434,555h1v1h-1zM431,556h5v1h-5zM431,557h1v1h-1zM435,557h1v1h-1zM431,558h1v1h-1zM435,558h1v1h-1zM431,559h5v1h-5zM438,554h1v1h-1zM437,555h1v1h-1zM437,556h1v1h-1zM437,557h1v1h-1zM437,558h1v1h-1zM438,559h1v1h-1zM440,554h4v1h-4zM444,555h1v1h-1zM443,556h1v1h-1zM442,557h1v1h-1zM441,558h1v1h-1zM440,559h5v1h-5zM446,554h1v1h-1zM447,555h1v1h-1zM447,556h1v1h-1zM447,557h1v1h-1zM447,558h1v1h-1zM446,559h1v1h-1z" fill="#ff0090"/><rect x="119" y="624" width="84" height="1" fill="#ff0090"/><path d="M119,611h2v1h-2zM120,612h1v1h-1zM120,613h1v1h-1zM120,614h1v1h-1zM120,615h1v1h-1zM124,611h4v1h-4zM124,612h1v1h-1zM127,612h1v1h-1zM124,613h5v1h-5zM124,614h1v1h-1zM128,614h1v1h-1zM124,615h1v1h-1zM128,615h1v1h-1zM124,616h5v1h-5zM130,611h5v1h-5zM130,612h1v1h-1zM130,613h4v1h-4zM134,614h1v1h-1zM134,615h1v1h-1zM130,616h4v1h-4zM136,611h4v1h-4zM136,612h1v1h-1zM139,612h1v1h-1zM136,613h5v1h-5zM136,614h1v1h-1zM140,614h1v1h-1zM136,615h1v1h-1zM140,615h1v1h-1zM136,616h5v1h-5zM142,611h4v1h-4zM142,612h1v1h-1zM145,612h1v1h-1zM142,613h5v1h-5zM142,614h1v1h-1zM146,614h1v1h-1zM142,615h1v1h-1zM146,615h1v1h-1zM142,616h5v1h-5zM148,611h4v1h-4zM148,612h1v1h-1zM151,612h1v1h-1zM148,613h5v1h-5zM148,614h1v1h-1zM152,614h1v1h-1zM148,615h1v1h-1zM152,615h1v1h-1zM148,616h5v1h-5zM154,615h3v1h-3zM158,611h2v1h-2zM159,612h1v1h-1zM159,613h1v1h-1zM159,614h1v1h-1zM159,615h1v1h-1zM163,611h4v1h-4zM163,612h1v1h-1zM166,612h1v1h-1zM163,613h5v1h-5zM163,614h1v1h-1zM167,614h1v1h-1zM163,615h1v1h-1zM167,615h1v1h-1zM163,616h5v1h-5zM169,611h5v1h-5zM169,612h1v1h-1zM169,613h4v1h-4zM173,614h1v1h-1zM173,615h1v1h-1zM169,616h4v1h-4zM175,611h4v1h-4zM175,612h1v1h-1zM178,612h1v1h-1zM175,613h5v1h-5zM175,614h1v1h-1zM179,614h1v1h-1zM175,615h1v1h-1zM179,615h1v1h-1zM175,616h5v1h-5zM181,611h4v1h-4zM181,612h1v1h-1zM184,612h1v1h-1zM181,613h5v1h-5zM181,614h1v1h-1zM185,614h1v1h-1zM181,615h1v1h-1zM185,615h1v1h-1zM181,616h5v1h-5zM187,611h4v1h-4zM187,612h1v1h-1zM190,612h1v1h-1zM187,613h5v1h-5zM187,614h1v1h-1zM191,614h1v1h-1zM187,615h1v1h-1zM191,615h1v1h-1zM187,616h5v1h-5zM194,611h1v1h-1zM193,612h1v1h-1zM193,613h1v1h-1zM193,614h1v1h-1zM193,615h1v1h-1zM194,616h1v1h-1zM196,611h4v1h-4zM200,612h1v1h-1zM199,613h1v1h-1zM198,614h1v1h-1zM197,615h1v1h-1zM196,616h5v1h-5zM202,611h1v1h-1zM203,612h1v1h-1zM203,613h1v1h-1zM203,614h1v1h-1zM203,615h1v1h-1zM202,616h1v1h-1z" fill="#ff0090"/><rect x="381" y="647" width="87" height="1" fill="#ff0090"/><path d="M381,635h2v1h-2zM382,636h1v1h-1zM382,637h1v1h-1zM382,638h1v1h-1zM382,639h1v1h-1zM386,635h4v1h-4zM386,636h1v1h-1zM389,636h1v1h-1zM386,637h5v1h-5zM386,638h1v1h-1zM390,638h1v1h-1zM386,639h1v1h-1zM390,639h1v1h-1zM386,640h5v1h-5zM392,635h5v1h-5zM392,636h1v1h-1zM392,637h4v1h-4zM396,638h1v1h-1zM396,639h1v1h-1zM392,640h4v1h-4zM398,635h4v1h-4zM398,636h1v1h-1zM401,636h1v1h-1zM398,637h5v1h-5zM398,638h1v1h-1zM402,638h1v1h-1zM398,639h1v1h-1zM402,639h1v1h-1zM398,640h5v1h-5zM404,635h4v1h-4zM404,636h1v1h-1zM407,636h1v1h-1zM404,637h5v1h-5zM404,638h1v1h-1zM408,638h1v1h-1zM404,639h1v1h-1zM408,639h1v1h-1zM404,640h5v1h-5zM410,635h4v1h-4zM410,636h1v1h-1zM413,636h1v1h-1zM410,637h5v1h-5zM410,638h1v1h-1zM414,638h1v1h-1zM410,639h1v1h-1zM414,639h1v1h-1zM410,640h5v1h-5zM416,639h3v1h-3zM420,635h2v1h-2zM421,636h1v1h-1zM421,637h1v1h-1zM421,638h1v1h-1zM421,639h1v1h-1zM425,635h4v1h-4zM425,636h1v1h-1zM428,636h1v1h-1zM425,637h5v1h-5zM425,638h1v1h-1zM429,638h1v1h-1zM425,639h1v1h-1zM429,639h1v1h-1zM425,640h5v1h-5zM431,635h5v1h-5zM431,636h1v1h-1zM431,637h4v1h-4zM435,638h1v1h-1zM435,639h1v1h-1zM431,640h4v1h-4zM437,635h4v1h-4zM437,636h1v1h-1zM440,636h1v1h-1zM437,637h5v1h-5zM437,638h1v1h-1zM441,638h1v1h-1zM437,639h1v1h-1zM441,639h1v1h-1zM437,640h5v1h-5zM443,635h4v1h-4zM443,636h1v1h-1zM446,636h1v1h-1zM443,637h5v1h-5zM443,638h1v1h-1zM447,638h1v1h-1zM443,639h1v1h-1zM447,639h1v1h-1zM443,640h5v1h-5zM449,635h4v1h-4zM449,636h1v1h-1zM452,636h1v1h-1zM449,637h5v1h-5zM449,638h1v1h-1zM453,638h1v1h-1zM449,639h1v1h-1zM453,639h1v1h-1zM449,640h5v1h-5zM456,635h1v1h-1zM455,636h1v1h-1zM455,637h1v1h-1zM455,638h1v1h-1zM455,639h1v1h-1zM456,640h1v1h-1zM458,635h4v1h-4zM462,636h1v1h-1zM461,637h1v1h-1zM460,638h1v1h-1zM459,639h1v1h-1zM458,640h5v1h-5zM464,635h1v1h-1zM465,636h1v1h-1zM465,637h1v1h-1zM465,638h1v1h-1zM465,639h1v1h-1zM464,640h1v1h-1z" fill="#ff0090"/><rect x="376" y="185" width="36" height="1" fill="#ff0090"/><rect x="376" y="177" width="36" height="3" fill="url(#sm)"/><rect x="415" y="185" width="37" height="1" fill="#ff0090"/><rect x="415" y="177" width="37" height="3" fill="url(#sm)"/><rect x="481" y="216" width="20" height="1" fill="#ff0090"/><rect x="481" y="211" width="20" height="3" fill="url(#sm)"/><rect x="530" y="214" width="24" height="1" fill="#ff0090"/><rect x="530" y="207" width="24" height="3" fill="url(#sm)"/><rect x="277" y="558" width="19" height="1" fill="#ff0090"/><rect x="277" y="553" width="19" height="3" fill="url(#sm)"/><rect x="509" y="572" width="45" height="1" fill="#ff0090"/><rect x="509" y="566" width="45" height="3" fill="url(#sm)"/><rect x="510" y="649" width="46" height="1" fill="#ff0090"/><rect x="510" y="643" width="46" height="3" fill="url(#sm)"/><rect x="32" y="198" width="14" height="1" fill="#ff0090"/><rect x="32" y="192" width="14" height="3" fill="url(#sm)"/><path d="M127,135h3v1h1v4h-1v1h-3v-1h-1v-4h1z" fill="#ff0000"/><rect x="128" y="137" width="1" height="1" fill="#0000ff"/><path d="M216,139h3v1h1v4h-1v1h-3v-1h-1v-4h1z" fill="#ff0000"/><rect x="217" y="141" width="1" height="1" fill="#0000ff"/><path d="M243,145h3v1h1v4h-1v1h-3v-1h-1v-4h1z" fill="#ff0000"/><rect x="244" y="147" width="1" height="1" fill="#0000ff"/><path d="M108,178h3v1h1v4h-1v1h-3v-1h-1v-4h1z" fill="#ff0000"/><rect x="109" y="180" width="1" height="1" fill="#0000ff"/><path d="M150,179h3v1h1v4h-1v1h-3v-1h-1v-4h1z" fill="#ff0000"/><rect x="151" y="181" width="1" height="1" fill="#0000ff"/><path d="M201,181h3v1h1v4h-1v1h-3v-1h-1v-4h1z" fill="#ff0000"/><rect x="202" y="183" width="1" height="1" fill="#0000ff"/><path d="M251,184h3v1h1v4h-1v1h-3v-1h-1v-4h1z" fill="#ff0000"/><rect x="252" y="186" width="1" height="1" fill="#0000ff"/><path d="M99,199h3v1h1v4h-1v1h-3v-1h-1v-4h1z" fill="#ff0000"/><rect x="100" y="201" width="1" height="1" fill="#0000ff"/><path d="M129,197h3v1h1v4h-1v1h-3v-1h-1v-4h1z" fill="#ff0000"/><rect x="130" y="199" width="1" height="1" fill="#0000ff"/><path d="M157,193h3v1h1v4h-1v1h-3v-1h-1v-4h1z" fill="#ff0000"/><rect x="158" y="195" width="1" height="1" fill="#0000ff"/><path d="M67,236h3v1h1v4h-1v1h-3v-1h-1v-4h1z" fill="#ff0000"/><rect x="68" y="238" width="1" height="1" fill="#0000ff"/><path d="M93,244h3v1h1v4h-1v1h-3v-1h-1v-4h1z" fill="#ff0000"/><rect x="94" y="246" width="1" height="1" fill="#0000ff"/><path d="M129,240h3v1h1v4h-1v1h-3v-1h-1v-4h1z" fill="#ff0000"/><rect x="130" y="242" width="1" height="1" fill="#0000ff"/><path d="M273,233h3v1h1v4h-1v1h-3v-1h-1v-4h1z" fill="#ff0000"/><rect x="274" y="235" width="1" height="1" fill="#0000ff"/><path d="M334,161h3v1h1v4h-1v1h-3v-1h-1v-4h1z" fill="#ff0000"/><rect x="335" y="163" width="1" height="1" fill="#0000ff"/><path d="M336,199h3v1h1v4h-1v1h-3v-1h-1v-4h1z" fill="#ff0000"/><rect x="337" y="201" width="1" height="1" fill="#0000ff"/><path d="M368,197h3v1h1v4h-1v1h-3v-1h-1v-4h1z" fill="#ff0000"/><rect x="369" y="199" width="1" height="1" fill="#0000ff"/><path d="M362,227h3v1h1v4h-1v1h-3v-1h-1v-4h1z" fill="#ff0000"/><rect x="363" y="229" width="1" height="1" fill="#0000ff"/><path d="M377,227h3v1h1v4h-1v1h-3v-1h-1v-4h1z" fill="#ff0000"/><rect x="378" y="229" width="1" height="1" fill="#0000ff"/><path d="M388,227h3v1h1v4h-1v1h-3v-1h-1v-4h1z" fill="#ff0000"/><rect x="389" y="229" width="1" height="1" fill="#0000ff"/><path d="M479,235h3v1h1v4h-1v1h-3v-1h-1v-4h1z" fill="#ff0000"/><rect x="480" y="237" width="1" height="1" fill="#0000ff"/><path d="M77,259h3v1h1v4h-1v1h-3v-1h-1v-4h1z" fill="#ff0000"/><rect x="78" y="261" width="1" height="1" fill="#0000ff"/><path d="M165,270h3v1h1v4h-1v1h-3v-1h-1v-4h1z" fill="#ff0000"/><rect x="166" y="272" width="1" height="1" fill="#0000ff"/><path d="M55,289h3v1h1v4h-1v1h-3v-1h-1v-4h1z" fill="#ff0000"/><rect x="56" y="291" width="1" height="1" fill="#0000ff"/><path d="M100,328h3v1h1v4h-1v1h-3v-1h-1v-4h1z" fill="#ff0000"/><rect x="101" y="330" width="1" height="1" fill="#0000ff"/><path d="M95,333h3v1h1v4h-1v1h-3v-1h-1v-4h1z" fill="#ff0000"/><rect x="96" y="335" width="1" height="1" fill="#0000ff"/><path d="M183,328h3v1h1v4h-1v1h-3v-1h-1v-4h1z" fill="#ff0000"/><rect x="184" y="330" width="1" height="1" fill="#0000ff"/><path d="M285,316h3v1h1v4h-1v1h-3v-1h-1v-4h1z" fill="#ff0000"/><rect x="286" y="318" width="1" height="1" fill="#0000ff"/><path d="M322,312h3v1h1v4h-1v1h-3v-1h-1v-4h1z" fill="#ff0000"/><rect x="323" y="314" width="1" height="1" fill="#0000ff"/><path d="M388,316h3v1h1v4h-1v1h-3v-1h-1v-4h1z" fill="#ff0000"/><rect x="389" y="318" width="1" height="1" fill="#0000ff"/><path d="M308,331h3v1h1v4h-1v1h-3v-1h-1v-4h1z" fill="#ff0000"/><rect x="309" y="333" width="1" height="1" fill="#0000ff"/><path d="M368,337h3v1h1v4h-1v1h-3v-1h-1v-4h1z" fill="#ff0000"/><rect x="369" y="339" width="1" height="1" fill="#0000ff"/><path d="M408,343h3v1h1v4h-1v1h-3v-1h-1v-4h1z" fill="#ff0000"/><rect x="409" y="345" width="1" height="1" fill="#0000ff"/><path d="M536,341h3v1h1v4h-1v1h-3v-1h-1v-4h1z" fill="#ff0000"/><rect x="537" y="343" width="1" height="1" fill="#0000ff"/><path d="M184,345h3v1h1v4h-1v1h-3v-1h-1v-4h1z" fill="#ff0000"/><rect x="185" y="347" width="1" height="1" fill="#0000ff"/><path d="M20,370h3v1h1v4h-1v1h-3v-1h-1v-4h1z" fill="#ff0000"/><rect x="21" y="372" width="1" height="1" fill="#0000ff"/><path d="M40,398h3v1h1v4h-1v1h-3v-1h-1v-4h1z" fill="#ff0000"/><rect x="41" y="400" width="1" height="1" fill="#0000ff"/><path d="M79,412h3v1h1v4h-1v1h-3v-1h-1v-4h1z" fill="#ff0000"/><rect x="80" y="414" width="1" height="1" fill="#0000ff"/><path d="M119,419h3v1h1v4h-1v1h-3v-1h-1v-4h1z" fill="#ff0000"/><rect x="120" y="421" width="1" height="1" fill="#0000ff"/><path d="M201,420h3v1h1v4h-1v1h-3v-1h-1v-4h1z" fill="#ff0000"/><rect x="202" y="422" width="1" height="1" fill="#0000ff"/><path d="M254,413h3v1h1v4h-1v1h-3v-1h-1v-4h1z" fill="#ff0000"/><rect x="255" y="415" width="1" height="1" fill="#0000ff"/><path d="M80,432h3v1h1v4h-1v1h-3v-1h-1v-4h1z" fill="#ff0000"/><rect x="81" y="434" width="1" height="1" fill="#0000ff"/><path d="M139,437h3v1h1v4h-1v1h-3v-1h-1v-4h1z" fill="#ff0000"/><rect x="140" y="439" width="1" height="1" fill="#0000ff"/><path d="M176,442h3v1h1v4h-1v1h-3v-1h-1v-4h1z" fill="#ff0000"/><rect x="177" y="444" width="1" height="1" fill="#0000ff"/><path d="M536,410h3v1h1v4h-1v1h-3v-1h-1v-4h1z" fill="#ff0000"/><rect x="537" y="412" width="1" height="1" fill="#0000ff"/><path d="M378,420h3v1h1v4h-1v1h-3v-1h-1v-4h1z" fill="#ff0000"/><rect x="379" y="422" width="1" height="1" fill="#0000ff"/><path d="M486,433h3v1h1v4h-1v1h-3v-1h-1v-4h1z" fill="#ff0000"/><rect x="487" y="435" width="1" height="1" fill="#0000ff"/><path d="M26,512h3v1h1v4h-1v1h-3v-1h-1v-4h1z" fill="#ff0000"/><rect x="27" y="514" width="1" height="1" fill="#0000ff"/><path d="M49,519h3v1h1v4h-1v1h-3v-1h-1v-4h1z" fill="#ff0000"/><rect x="50" y="521" width="1" height="1" fill="#0000ff"/><path d="M135,523h3v1h1v4h-1v1h-3v-1h-1v-4h1z" fill="#ff0000"/><rect x="136" y="525" width="1" height="1" fill="#0000ff"/><path d="M162,528h3v1h1v4h-1v1h-3v-1h-1v-4h1z" fill="#ff0000"/><rect x="163" y="530" width="1" height="1" fill="#0000ff"/><path d="M301,440h3v1h1v4h-1v1h-3v-1h-1v-4h1z" fill="#ff0000"/><rect x="302" y="442" width="1" height="1" fill="#0000ff"/><path d="M302,457h3v1h1v4h-1v1h-3v-1h-1v-4h1z" fill="#ff0000"/><rect x="303" y="459" width="1" height="1" fill="#0000ff"/><path d="M324,487h3v1h1v4h-1v1h-3v-1h-1v-4h1z" fill="#ff0000"/><rect x="325" y="489" width="1" height="1" fill="#0000ff"/><path d="M362,500h3v1h1v4h-1v1h-3v-1h-1v-4h1z" fill="#ff0000"/><rect x="363" y="502" width="1" height="1" fill="#0000ff"/><path d="M402,507h3v1h1v4h-1v1h-3v-1h-1v-4h1z" fill="#ff0000"/><rect x="403" y="509" width="1" height="1" fill="#0000ff"/><path d="M503,509h3v1h1v4h-1v1h-3v-1h-1v-4h1z" fill="#ff0000"/><rect x="504" y="511" width="1" height="1" fill="#0000ff"/><path d="M301,509h3v1h1v4h-1v1h-3v-1h-1v-4h1z" fill="#ff0000"/><rect x="302" y="511" width="1" height="1" fill="#0000ff"/><path d="M331,514h3v1h1v4h-1v1h-3v-1h-1v-4h1z" fill="#ff0000"/><rect x="332" y="516" width="1" height="1" fill="#0000ff"/><path d="M437,526h3v1h1v4h-1v1h-3v-1h-1v-4h1z" fill="#ff0000"/><rect x="438" y="528" width="1" height="1" fill="#0000ff"/><path d="M248,546h3v1h1v4h-1v1h-3v-1h-1v-4h1z" fill="#ff0000"/><rect x="249" y="548" width="1" height="1" fill="#0000ff"/><path d="M29,562h3v1h1v4h-1v1h-3v-1h-1v-4h1z" fill="#ff0000"/><rect x="30" y="564" width="1" height="1" fill="#0000ff"/><path d="M71,562h3v1h1v4h-1v1h-3v-1h-1v-4h1z" fill="#ff0000"/><rect x="72" y="564" width="1" height="1" fill="#0000ff"/><path d="M122,565h3v1h1v4h-1v1h-3v-1h-1v-4h1z" fill="#ff0000"/><rect x="123" y="567" width="1" height="1" fill="#0000ff"/><path d="M172,570h3v1h1v4h-1v1h-3v-1h-1v-4h1z" fill="#ff0000"/><rect x="173" y="572" width="1" height="1" fill="#0000ff"/><path d="M59,586h3v1h1v4h-1v1h-3v-1h-1v-4h1z" fill="#ff0000"/><rect x="60" y="588" width="1" height="1" fill="#0000ff"/><path d="M145,579h3v1h1v4h-1v1h-3v-1h-1v-4h1z" fill="#ff0000"/><rect x="146" y="581" width="1" height="1" fill="#0000ff"/><path d="M160,579h3v1h1v4h-1v1h-3v-1h-1v-4h1z" fill="#ff0000"/><rect x="161" y="581" width="1" height="1" fill="#0000ff"/><path d="M170,579h3v1h1v4h-1v1h-3v-1h-1v-4h1z" fill="#ff0000"/><rect x="171" y="581" width="1" height="1" fill="#0000ff"/><path d="M248,585h3v1h1v4h-1v1h-3v-1h-1v-4h1z" fill="#ff0000"/><rect x="249" y="587" width="1" height="1" fill="#0000ff"/><path d="M258,588h3v1h1v4h-1v1h-3v-1h-1v-4h1z" fill="#ff0000"/><rect x="259" y="590" width="1" height="1" fill="#0000ff"/><path d="M281,582h3v1h1v4h-1v1h-3v-1h-1v-4h1z" fill="#ff0000"/><rect x="282" y="584" width="1" height="1" fill="#0000ff"/><path d="M309,545h3v1h1v4h-1v1h-3v-1h-1v-4h1z" fill="#ff0000"/><rect x="310" y="547" width="1" height="1" fill="#0000ff"/><path d="M354,584h3v1h1v4h-1v1h-3v-1h-1v-4h1z" fill="#ff0000"/><rect x="355" y="586" width="1" height="1" fill="#0000ff"/><path d="M456,583h3v1h1v4h-1v1h-3v-1h-1v-4h1z" fill="#ff0000"/><rect x="457" y="585" width="1" height="1" fill="#0000ff"/><path d="M71,666h3v1h1v4h-1v1h-3v-1h-1v-4h1z" fill="#ff0000"/><rect x="72" y="668" width="1" height="1" fill="#0000ff"/><path d="M108,664h3v1h1v4h-1v1h-3v-1h-1v-4h1z" fill="#ff0000"/><rect x="109" y="666" width="1" height="1" fill="#0000ff"/><path d="M171,668h3v1h1v4h-1v1h-3v-1h-1v-4h1z" fill="#ff0000"/><rect x="172" y="670" width="1" height="1" fill="#0000ff"/><path d="M344,616h3v1h1v4h-1v1h-3v-1h-1v-4h1z" fill="#ff0000"/><rect x="345" y="618" width="1" height="1" fill="#0000ff"/><path d="M378,614h3v1h1v4h-1v1h-3v-1h-1v-4h1z" fill="#ff0000"/><rect x="379" y="616" width="1" height="1" fill="#0000ff"/><path d="M407,611h3v1h1v4h-1v1h-3v-1h-1v-4h1z" fill="#ff0000"/><rect x="408" y="613" width="1" height="1" fill="#0000ff"/><path d="M313,654h3v1h1v4h-1v1h-3v-1h-1v-4h1z" fill="#ff0000"/><rect x="314" y="656" width="1" height="1" fill="#0000ff"/><path d="M338,661h3v1h1v4h-1v1h-3v-1h-1v-4h1z" fill="#ff0000"/><rect x="339" y="663" width="1" height="1" fill="#0000ff"/><path d="M377,656h3v1h1v4h-1v1h-3v-1h-1v-4h1z" fill="#ff0000"/><rect x="378" y="658" width="1" height="1" fill="#0000ff"/><rect x="203" y="171" width="1" height="1" fill="#00ff00"/><rect x="202" y="172" width="3" height="1" fill="#00ff00"/><rect x="202" y="173" width="3" height="1" fill="#00ff00"/><rect x="200" y="174" width="7" height="1" fill="#00ff00"/><rect x="199" y="175" width="9" height="1" fill="#00ff00"/><rect x="200" y="176" width="7" height="1" fill="#00ff00"/><rect x="202" y="177" width="3" height="1" fill="#00ff00"/><rect x="202" y="178" width="3" height="1" fill="#00ff00"/><rect x="203" y="179" width="1" height="1" fill="#00ff00"/><rect x="384" y="140" width="1" height="1" fill="#00ff00"/><rect x="383" y="141" width="3" height="1" fill="#00ff00"/><rect x="383" y="142" width="3" height="1" fill="#00ff00"/><rect x="381" y="143" width="7" height="1" fill="#00ff00"/><rect x="380" y="144" width="9" height="1" fill="#00ff00"/><rect x="381" y="145" width="7" height="1" fill="#00ff00"/><rect x="383" y="146" width="3" height="1" fill="#00ff00"/><rect x="383" y="147" width="3" height="1" fill="#00ff00"/><rect x="384" y="148" width="1" height="1" fill="#00ff00"/><rect x="424" y="140" width="1" height="1" fill="#00ff00"/><rect x="423" y="141" width="3" height="1" fill="#00ff00"/><rect x="423" y="142" width="3" height="1" fill="#00ff00"/><rect x="421" y="143" width="7" height="1" fill="#00ff00"/><rect x="420" y="144" width="9" height="1" fill="#00ff00"/><rect x="421" y="145" width="7" height="1" fill="#00ff00"/><rect x="423" y="146" width="3" height="1" fill="#00ff00"/><rect x="423" y="147" width="3" height="1" fill="#00ff00"/><rect x="424" y="148" width="1" height="1" fill="#00ff00"/><rect x="168" y="235" width="1" height="1" fill="#00ff00"/><rect x="167" y="236" width="3" height="1" fill="#00ff00"/><rect x="167" y="237" width="3" height="1" fill="#00ff00"/><rect x="165" y="238" width="7" height="1" fill="#00ff00"/><rect x="164" y="239" width="9" height="1" fill="#00ff00"/><rect x="165" y="240" width="7" height="1" fill="#00ff00"/><rect x="167" y="241" width="3" height="1" fill="#00ff00"/><rect x="167" y="242" width="3" height="1" fill="#00ff00"/><rect x="168" y="243" width="1" height="1" fill="#00ff00"/><rect x="331" y="258" width="1" height="1" fill="#00ff00"/><rect x="330" y="259" width="3" height="1" fill="#00ff00"/><rect x="330" y="260" width="3" height="1" fill="#00ff00"/><rect x="328" y="261" width="7" height="1" fill="#00ff00"/><rect x="327" y="262" width="9" height="1" fill="#00ff00"/><rect x="328" y="263" width="7" height="1" fill="#00ff00"/><rect x="330" y="264" width="3" height="1" fill="#00ff00"/><rect x="330" y="265" width="3" height="1" fill="#00ff00"/><rect x="331" y="266" width="1" height="1" fill="#00ff00"/><rect x="423" y="271" width="1" height="1" fill="#00ff00"/><rect x="422" y="272" width="3" height="1" fill="#00ff00"/><rect x="422" y="273" width="3" height="1" fill="#00ff00"/><rect x="420" y="274" width="7" height="1" fill="#00ff00"/><rect x="419" y="275" width="9" height="1" fill="#00ff00"/><rect x="420" y="276" width="7" height="1" fill="#00ff00"/><rect x="422" y="277" width="3" height="1" fill="#00ff00"/><rect x="422" y="278" width="3" height="1" fill="#00ff00"/><rect x="423" y="279" width="1" height="1" fill="#00ff00"/><rect x="348" y="279" width="1" height="1" fill="#00ff00"/><rect x="347" y="280" width="3" height="1" fill="#00ff00"/><rect x="347" y="281" width="3" height="1" fill="#00ff00"/><rect x="345" y="282" width="7" height="1" fill="#00ff00"/><rect x="344" y="283" width="9" height="1" fill="#00ff00"/><rect x="345" y="284" width="7" height="1" fill="#00ff00"/><rect x="347" y="285" width="3" height="1" fill="#00ff00"/><rect x="347" y="286" width="3" height="1" fill="#00ff00"/><rect x="348" y="287" width="1" height="1" fill="#00ff00"/><rect x="364" y="279" width="1" height="1" fill="#00ff00"/><rect x="363" y="280" width="3" height="1" fill="#00ff00"/><rect x="363" y="281" width="3" height="1" fill="#00ff00"/><rect x="361" y="282" width="7" height="1" fill="#00ff00"/><rect x="360" y="283" width="9" height="1" fill="#00ff00"/><rect x="361" y="284" width="7" height="1" fill="#00ff00"/><rect x="363" y="285" width="3" height="1" fill="#00ff00"/><rect x="363" y="286" width="3" height="1" fill="#00ff00"/><rect x="364" y="287" width="1" height="1" fill="#00ff00"/><rect x="324" y="294" width="1" height="1" fill="#00ff00"/><rect x="323" y="295" width="3" height="1" fill="#00ff00"/><rect x="323" y="296" width="3" height="1" fill="#00ff00"/><rect x="321" y="297" width="7" height="1" fill="#00ff00"/><rect x="320" y="298" width="9" height="1" fill="#00ff00"/><rect x="321" y="299" width="7" height="1" fill="#00ff00"/><rect x="323" y="300" width="3" height="1" fill="#00ff00"/><rect x="323" y="301" width="3" height="1" fill="#00ff00"/><rect x="324" y="302" width="1" height="1" fill="#00ff00"/><rect x="449" y="344" width="1" height="1" fill="#00ff00"/><rect x="448" y="345" width="3" height="1" fill="#00ff00"/><rect x="448" y="346" width="3" height="1" fill="#00ff00"/><rect x="446" y="347" width="7" height="1" fill="#00ff00"/><rect x="445" y="348" width="9" height="1" fill="#00ff00"/><rect x="446" y="349" width="7" height="1" fill="#00ff00"/><rect x="448" y="350" width="3" height="1" fill="#00ff00"/><rect x="448" y="351" width="3" height="1" fill="#00ff00"/><rect x="449" y="352" width="1" height="1" fill="#00ff00"/><rect x="216" y="443" width="1" height="1" fill="#00ff00"/><rect x="215" y="444" width="3" height="1" fill="#00ff00"/><rect x="215" y="445" width="3" height="1" fill="#00ff00"/><rect x="213" y="446" width="7" height="1" fill="#00ff00"/><rect x="212" y="447" width="9" height="1" fill="#00ff00"/><rect x="213" y="448" width="7" height="1" fill="#00ff00"/><rect x="215" y="449" width="3" height="1" fill="#00ff00"/><rect x="215" y="450" width="3" height="1" fill="#00ff00"/><rect x="216" y="451" width="1" height="1" fill="#00ff00"/><rect x="124" y="555" width="1" height="1" fill="#00ff00"/><rect x="123" y="556" width="3" height="1" fill="#00ff00"/><rect x="123" y="557" width="3" height="1" fill="#00ff00"/><rect x="121" y="558" width="7" height="1" fill="#00ff00"/><rect x="120" y="559" width="9" height="1" fill="#00ff00"/><rect x="121" y="560" width="7" height="1" fill="#00ff00"/><rect x="123" y="561" width="3" height="1" fill="#00ff00"/><rect x="123" y="562" width="3" height="1" fill="#00ff00"/><rect x="124" y="563" width="1" height="1" fill="#00ff00"/><rect x="533" y="536" width="1" height="1" fill="#00ff00"/><rect x="532" y="537" width="3" height="1" fill="#00ff00"/><rect x="532" y="538" width="3" height="1" fill="#00ff00"/><rect x="530" y="539" width="7" height="1" fill="#00ff00"/><rect x="529" y="540" width="9" height="1" fill="#00ff00"/><rect x="530" y="541" width="7" height="1" fill="#00ff00"/><rect x="532" y="542" width="3" height="1" fill="#00ff00"/><rect x="532" y="543" width="3" height="1" fill="#00ff00"/><rect x="533" y="544" width="1" height="1" fill="#00ff00"/><rect x="116" y="610" width="1" height="1" fill="#00ff00"/><rect x="115" y="611" width="3" height="1" fill="#00ff00"/><rect x="115" y="612" width="3" height="1" fill="#00ff00"/><rect x="113" y="613" width="7" height="1" fill="#00ff00"/><rect x="112" y="614" width="9" height="1" fill="#00ff00"/><rect x="113" y="615" width="7" height="1" fill="#00ff00"/><rect x="115" y="616" width="3" height="1" fill="#00ff00"/><rect x="115" y="617" width="3" height="1" fill="#00ff00"/><rect x="116" y="618" width="1" height="1" fill="#00ff00"/><rect x="203" y="623" width="1" height="1" fill="#00ff00"/><rect x="202" y="624" width="3" height="1" fill="#00ff00"/><rect x="202" y="625" width="3" height="1" fill="#00ff00"/><rect x="200" y="626" width="7" height="1" fill="#00ff00"/><rect x="199" y="627" width="9" height="1" fill="#00ff00"/><rect x="200" y="628" width="7" height="1" fill="#00ff00"/><rect x="202" y="629" width="3" height="1" fill="#00ff00"/><rect x="202" y="630" width="3" height="1" fill="#00ff00"/><rect x="203" y="631" width="1" height="1" fill="#00ff00"/><rect x="134" y="631" width="1" height="1" fill="#00ff00"/><rect x="133" y="632" width="3" height="1" fill="#00ff00"/><rect x="133" y="633" width="3" height="1" fill="#00ff00"/><rect x="131" y="634" width="7" height="1" fill="#00ff00"/><rect x="130" y="635" width="9" height="1" fill="#00ff00"/><rect x="131" y="636" width="7" height="1" fill="#00ff00"/><rect x="133" y="637" width="3" height="1" fill="#00ff00"/><rect x="133" y="638" width="3" height="1" fill="#00ff00"/><rect x="134" y="639" width="1" height="1" fill="#00ff00"/><rect x="150" y="631" width="1" height="1" fill="#00ff00"/><rect x="149" y="632" width="3" height="1" fill="#00ff00"/><rect x="149" y="633" width="3" height="1" fill="#00ff00"/><rect x="147" y="634" width="7" height="1" fill="#00ff00"/><rect x="146" y="635" width="9" height="1" fill="#00ff00"/><rect x="147" y="636" width="7" height="1" fill="#00ff00"/><rect x="149" y="637" width="3" height="1" fill="#00ff00"/><rect x="149" y="638" width="3" height="1" fill="#00ff00"/><rect x="150" y="639" width="1" height="1" fill="#00ff00"/><rect x="110" y="645" width="1" height="1" fill="#00ff00"/><rect x="109" y="646" width="3" height="1" fill="#00ff00"/><rect x="109" y="647" width="3" height="1" fill="#00ff00"/><rect x="107" y="648" width="7" height="1" fill="#00ff00"/><rect x="106" y="649" width="9" height="1" fill="#00ff00"/><rect x="107" y="650" width="7" height="1" fill="#00ff00"/><rect x="109" y="651" width="3" height="1" fill="#00ff00"/><rect x="109" y="652" width="3" height="1" fill="#00ff00"/><rect x="110" y="653" width="1" height="1" fill="#00ff00"/><rect x="418" y="652" width="1" height="1" fill="#00ff00"/><rect x="417" y="653" width="3" height="1" fill="#00ff00"/><rect x="417" y="654" width="3" height="1" fill="#00ff00"/><rect x="415" y="655" width="7" height="1" fill="#00ff00"/><rect x="414" y="656" width="9" height="1" fill="#00ff00"/><rect x="415" y="657" width="7" height="1" fill="#00ff00"/><rect x="417" y="658" width="3" height="1" fill="#00ff00"/><rect x="417" y="659" width="3" height="1" fill="#00ff00"/><rect x="418" y="660" width="1" height="1" fill="#00ff00"/><rect x="535" y="613" width="1" height="1" fill="#00ff00"/><rect x="534" y="614" width="3" height="1" fill="#00ff00"/><rect x="534" y="615" width="3" height="1" fill="#00ff00"/><rect x="532" y="616" width="7" height="1" fill="#00ff00"/><rect x="531" y="617" width="9" height="1" fill="#00ff00"/><rect x="532" y="618" width="7" height="1" fill="#00ff00"/><rect x="534" y="619" width="3" height="1" fill="#00ff00"/><rect x="534" y="620" width="3" height="1" fill="#00ff00"/><rect x="535" y="621" width="1" height="1" fill="#00ff00"/></g><text x="474" y="691" font-family="Liberation Sans" font-weight="bold" font-size="11" fill="#000">#1</text></svg><div class="a" style="left:951px;top:88px;width:269px;height:609px;background:#f5f5f5"></div><div class="a" style="left:956px;top:88px;width:264px;height:18px;background:#f0f0f0;border:1px solid #a0a0a0;border-right:none"></div><div class="t" style="left:960px;top:91px;font-size:12px">文件列表</div><svg class="a" style="left:1208px;top:92px" width="10" height="10"><path d="M1.5,1.5 L8.5,8.5 M8.5,1.5 L1.5,8.5" stroke="#000" stroke-width="1.8"/></svg><div class="a" style="left:956px;top:108px;width:264px;height:585px;background:#fff;border:1px solid #a0a0a0;border-right:none"></div><div class="a" style="left:984px;top:126px;width:1px;height:13px;background:repeating-linear-gradient(#a0a0a0 0 1px,transparent 1px 2px)"></div><div class="a" style="left:984px;top:126px;width:1px;height:33px;background:repeating-linear-gradient(#a0a0a0 0 1px,transparent 1px 2px)"></div><div class="a" style="left:1003px;top:166px;width:1px;height:13px;background:repeating-linear-gradient(#a0a0a0 0 1px,transparent 1px 2px)"></div><div class="a" style="left:1003px;top:166px;width:1px;height:33px;background:repeating-linear-gradient(#a0a0a0 0 1px,transparent 1px 2px)"></div><div class="a" style="left:1022px;top:206px;width:1px;height:13px;background:repeating-linear-gradient(#a0a0a0 0 1px,transparent 1px 2px)"></div><div class="a" style="left:1022px;top:206px;width:1px;height:33px;background:repeating-linear-gradient(#a0a0a0 0 1px,transparent 1px 2px)"></div><div class="a" style="left:1022px;top:206px;width:1px;height:53px;background:repeating-linear-gradient(#a0a0a0 0 1px,transparent 1px 2px)"></div><div class="a" style="left:1041px;top:266px;width:1px;height:13px;background:repeating-linear-gradient(#a0a0a0 0 1px,transparent 1px 2px)"></div><div class="a" style="left:1041px;top:266px;width:1px;height:33px;background:repeating-linear-gradient(#a0a0a0 0 1px,transparent 1px 2px)"></div><div class="a" style="left:1041px;top:266px;width:1px;height:53px;background:repeating-linear-gradient(#a0a0a0 0 1px,transparent 1px 2px)"></div><div class="a" style="left:1060px;top:326px;width:1px;height:13px;background:repeating-linear-gradient(#a0a0a0 0 1px,transparent 1px 2px)"></div><div class="a" style="left:1022px;top:206px;width:1px;height:153px;background:repeating-linear-gradient(#a0a0a0 0 1px,transparent 1px 2px)"></div><div class="a" style="left:1003px;top:166px;width:1px;height:213px;background:repeating-linear-gradient(#a0a0a0 0 1px,transparent 1px 2px)"></div><div class="a" style="left:984px;top:126px;width:1px;height:273px;background:repeating-linear-gradient(#a0a0a0 0 1px,transparent 1px 2px)"></div><div class="a" style="left:1003px;top:406px;width:1px;height:13px;background:repeating-linear-gradient(#a0a0a0 0 1px,transparent 1px 2px)"></div><div class="a" style="left:1003px;top:406px;width:1px;height:33px;background:repeating-linear-gradient(#a0a0a0 0 1px,transparent 1px 2px)"></div><div class="a" style="left:1003px;top:406px;width:1px;height:53px;background:repeating-linear-gradient(#a0a0a0 0 1px,transparent 1px 2px)"></div><div class="a" style="left:1003px;top:406px;width:1px;height:73px;background:repeating-linear-gradient(#a0a0a0 0 1px,transparent 1px 2px)"></div><div class="a" style="left:984px;top:126px;width:1px;height:373px;background:repeating-linear-gradient(#a0a0a0 0 1px,transparent 1px 2px)"></div><div class="a" style="left:984px;top:126px;width:1px;height:393px;background:repeating-linear-gradient(#a0a0a0 0 1px,transparent 1px 2px)"></div><div class="a" style="left:957px;top:109px;width:263px;height:567px;overflow:hidden"></div><div class="a" style="left:971px;top:119px;width:6px;height:1px;background:repeating-linear-gradient(90deg,#a0a0a0 0 1px,transparent 1px 2px)"></div><div class="a" style="left:961px;top:115px;width:9px;height:9px;border:1px solid #8c8c8c;background:#fff"></div><div class="a" style="left:963px;top:119px;width:5px;height:1px;background:#000"></div><div class="a" style="left:978px;top:112px;width:5px;height:2px;background:#f4e070"></div><div class="a" style="left:978px;top:113px;width:13px;height:10px;background:linear-gradient(#fbf0a0,#f0c850)"></div><div class="a" style="left:979px;top:115px;width:4px;height:1px;background:#fff"></div><div class="a" style="left:984px;top:123px;width:1px;height:2px;background:#a08050"></div><div class="a" style="left:978px;top:125px;width:13px;height:2px;background:linear-gradient(90deg,#c0a080,#e0c8a0,#c0a080)"></div><div class="t" style="left:997px;top:112px;font-size:12.5px">H:\样片文件\服装\</div><div class="a" style="left:990px;top:139px;width:6px;height:1px;background:repeating-linear-gradient(90deg,#a0a0a0 0 1px,transparent 1px 2px)"></div><div class="a" style="left:980px;top:135px;width:9px;height:9px;border:1px solid #8c8c8c;background:#fff"></div><div class="a" style="left:982px;top:139px;width:5px;height:1px;background:#000"></div><div class="a" style="left:984px;top:137px;width:1px;height:5px;background:#000"></div><div class="a" style="left:995px;top:132px;width:5px;height:2px;background:#fcb238;border-radius:1px 1px 0 0"></div><div class="a" style="left:995px;top:133px;width:14px;height:11px;background:linear-gradient(160deg,#fcb238,#f89a48);"></div><div class="t" style="left:1016px;top:132px;font-size:12.5px">AAMA DXF</div><div class="a" style="left:990px;top:159px;width:6px;height:1px;background:repeating-linear-gradient(90deg,#a0a0a0 0 1px,transparent 1px 2px)"></div><div class="a" style="left:980px;top:155px;width:9px;height:9px;border:1px solid #8c8c8c;background:#fff"></div><div class="a" style="left:982px;top:159px;width:5px;height:1px;background:#000"></div><div class="a" style="left:995px;top:152px;width:5px;height:2px;background:#fcb238;border-radius:1px 1px 0 0"></div><div class="a" style="left:995px;top:153px;width:14px;height:11px;background:linear-gradient(160deg,#fcb238,#f89a48);"></div><div class="t" style="left:1016px;top:152px;font-size:12.5px">HL未裁剪</div><div class="a" style="left:1009px;top:179px;width:6px;height:1px;background:repeating-linear-gradient(90deg,#a0a0a0 0 1px,transparent 1px 2px)"></div><div class="a" style="left:999px;top:175px;width:9px;height:9px;border:1px solid #8c8c8c;background:#fff"></div><div class="a" style="left:1001px;top:179px;width:5px;height:1px;background:#000"></div><div class="a" style="left:1003px;top:177px;width:1px;height:5px;background:#000"></div><div class="a" style="left:1014px;top:172px;width:5px;height:2px;background:#fcb238;border-radius:1px 1px 0 0"></div><div class="a" style="left:1014px;top:173px;width:14px;height:11px;background:linear-gradient(160deg,#fcb238,#f89a48);"></div><div class="t" style="left:1035px;top:172px;font-size:12.5px">F1-1800868(M4011927)548件</div><div class="a" style="left:1009px;top:199px;width:6px;height:1px;background:repeating-linear-gradient(90deg,#a0a0a0 0 1px,transparent 1px 2px)"></div><div class="a" style="left:999px;top:195px;width:9px;height:9px;border:1px solid #8c8c8c;background:#fff"></div><div class="a" style="left:1001px;top:199px;width:5px;height:1px;background:#000"></div><div class="a" style="left:1014px;top:192px;width:5px;height:2px;background:#fcb238;border-radius:1px 1px 0 0"></div><div class="a" style="left:1014px;top:193px;width:14px;height:11px;background:linear-gradient(160deg,#fcb238,#f89a48);"></div><div class="t" style="left:1035px;top:192px;font-size:12.5px">F1-1800979(M2011748-5)1013件</div><div class="a" style="left:1022px;top:219px;width:12px;height:1px;background:repeating-linear-gradient(90deg,#a0a0a0 0 1px,transparent 1px 2px)"></div><div class="a" style="left:1033px;top:212px;width:5px;height:2px;background:#fcb238;border-radius:1px 1px 0 0"></div><div class="a" style="left:1033px;top:213px;width:14px;height:11px;background:linear-gradient(160deg,#fcb238,#f89a48);"></div><div class="t" style="left:1054px;top:212px;font-size:12.5px">F1-1800979(M2011748-5)1013件-A</div><div class="a" style="left:1028px;top:239px;width:6px;height:1px;background:repeating-linear-gradient(90deg,#a0a0a0 0 1px,transparent 1px 2px)"></div><div class="a" style="left:1018px;top:235px;width:9px;height:9px;border:1px solid #8c8c8c;background:#fff"></div><div class="a" style="left:1020px;top:239px;width:5px;height:1px;background:#000"></div><div class="a" style="left:1022px;top:237px;width:1px;height:5px;background:#000"></div><div class="a" style="left:1033px;top:232px;width:5px;height:2px;background:#fcb238;border-radius:1px 1px 0 0"></div><div class="a" style="left:1033px;top:233px;width:14px;height:11px;background:linear-gradient(160deg,#fcb238,#f89a48);"></div><div class="t" style="left:1054px;top:232px;font-size:12.5px">原文件</div><div class="a" style="left:1028px;top:259px;width:6px;height:1px;background:repeating-linear-gradient(90deg,#a0a0a0 0 1px,transparent 1px 2px)"></div><div class="a" style="left:1018px;top:255px;width:9px;height:9px;border:1px solid #8c8c8c;background:#fff"></div><div class="a" style="left:1020px;top:259px;width:5px;height:1px;background:#000"></div><div class="a" style="left:1033px;top:252px;width:5px;height:2px;background:#fcb238;border-radius:1px 1px 0 0"></div><div class="a" style="left:1033px;top:253px;width:14px;height:11px;background:linear-gradient(160deg,#fcb238,#f89a48);"></div><div class="t" style="left:1054px;top:252px;font-size:12.5px">裁剪文件</div><div class="a" style="left:1047px;top:279px;width:6px;height:1px;background:repeating-linear-gradient(90deg,#a0a0a0 0 1px,transparent 1px 2px)"></div><div class="a" style="left:1037px;top:275px;width:9px;height:9px;border:1px solid #8c8c8c;background:#fff"></div><div class="a" style="left:1039px;top:279px;width:5px;height:1px;background:#000"></div><div class="a" style="left:1041px;top:277px;width:1px;height:5px;background:#000"></div><div class="a" style="left:1052px;top:272px;width:5px;height:2px;background:#fcb238;border-radius:1px 1px 0 0"></div><div class="a" style="left:1052px;top:273px;width:14px;height:11px;background:linear-gradient(160deg,#fcb238,#f89a48);"></div><div class="t" style="left:1073px;top:272px;font-size:12.5px">衬</div><div class="a" style="left:1047px;top:299px;width:6px;height:1px;background:repeating-linear-gradient(90deg,#a0a0a0 0 1px,transparent 1px 2px)"></div><div class="a" style="left:1037px;top:295px;width:9px;height:9px;border:1px solid #8c8c8c;background:#fff"></div><div class="a" style="left:1039px;top:299px;width:5px;height:1px;background:#000"></div><div class="a" style="left:1041px;top:297px;width:1px;height:5px;background:#000"></div><div class="a" style="left:1052px;top:292px;width:5px;height:2px;background:#fcb238;border-radius:1px 1px 0 0"></div><div class="a" style="left:1052px;top:293px;width:14px;height:11px;background:linear-gradient(160deg,#fcb238,#f89a48);"></div><div class="t" style="left:1073px;top:292px;font-size:12.5px">里子</div><div class="a" style="left:1047px;top:319px;width:6px;height:1px;background:repeating-linear-gradient(90deg,#a0a0a0 0 1px,transparent 1px 2px)"></div><div class="a" style="left:1037px;top:315px;width:9px;height:9px;border:1px solid #8c8c8c;background:#fff"></div><div class="a" style="left:1039px;top:319px;width:5px;height:1px;background:#000"></div><div class="a" style="left:1052px;top:312px;width:5px;height:2px;background:#fcb238;border-radius:1px 1px 0 0"></div><div class="a" style="left:1052px;top:313px;width:14px;height:11px;background:linear-gradient(160deg,#fcb238,#f89a48);"></div><div class="t" style="left:1073px;top:312px;font-size:12.5px">面子</div><div class="a" style="left:1090px;top:329px;width:130px;height:20px;background:#ececec"></div><div class="a" style="left:1066px;top:339px;width:6px;height:1px;background:repeating-linear-gradient(90deg,#a0a0a0 0 1px,transparent 1px 2px)"></div><div class="a" style="left:1056px;top:335px;width:9px;height:9px;border:1px solid #8c8c8c;background:#fff"></div><div class="a" style="left:1058px;top:339px;width:5px;height:1px;background:#000"></div><div class="a" style="left:1060px;top:337px;width:1px;height:5px;background:#000"></div><div class="a" style="left:1071px;top:332px;width:5px;height:2px;background:#dca030;border-radius:1px 1px 0 0"></div><div class="a" style="left:1071px;top:333px;width:14px;height:11px;background:linear-gradient(160deg,#dca030,#d48c3c);"></div><div class="t" style="left:1092px;top:332px;font-size:12.5px">F1-1800979(M2011748-5)1013件n</div><div class="a" style="left:1022px;top:359px;width:12px;height:1px;background:repeating-linear-gradient(90deg,#a0a0a0 0 1px,transparent 1px 2px)"></div><svg class="a" style="left:1033px;top:351px" width="16" height="16"><path d="M0.5,0.5 H14.5 V9.5 L12.5,11.5 L10.5,11.5 V13.5 L8.5,13.5 L7,14.5 L5.5,13.5 L4,14.5 L2,13.5 L0.5,14 Z" fill="#fff" stroke="#000" stroke-width="1"/><rect x="2.5" y="2.5" width="6" height="5" fill="none" stroke="#00f"/><path d="M2,8.5 H10" stroke="#f00"/><path d="M3.5,8 L5.5,5 L7.5,8" fill="none" stroke="#f00"/><rect x="9.5" y="4.5" width="4" height="4" fill="none" stroke="#f0f"/><rect x="13" y="11" width="1" height="1" fill="#208080"/></svg><div class="t" style="left:1054px;top:352px;font-size:12.5px">F1-1800979(M2011748-5)1013件</div><div class="a" style="left:1009px;top:379px;width:6px;height:1px;background:repeating-linear-gradient(90deg,#a0a0a0 0 1px,transparent 1px 2px)"></div><div class="a" style="left:999px;top:375px;width:9px;height:9px;border:1px solid #8c8c8c;background:#fff"></div><div class="a" style="left:1001px;top:379px;width:5px;height:1px;background:#000"></div><div class="a" style="left:1003px;top:377px;width:1px;height:5px;background:#000"></div><div class="a" style="left:1014px;top:372px;width:5px;height:2px;background:#fcb238;border-radius:1px 1px 0 0"></div><div class="a" style="left:1014px;top:373px;width:14px;height:11px;background:linear-gradient(160deg,#fcb238,#f89a48);"></div><div class="t" style="left:1035px;top:372px;font-size:12.5px">精裁</div><div class="a" style="left:990px;top:399px;width:6px;height:1px;background:repeating-linear-gradient(90deg,#a0a0a0 0 1px,transparent 1px 2px)"></div><div class="a" style="left:980px;top:395px;width:9px;height:9px;border:1px solid #8c8c8c;background:#fff"></div><div class="a" style="left:982px;top:399px;width:5px;height:1px;background:#000"></div><div class="a" style="left:995px;top:392px;width:5px;height:2px;background:#fcb238;border-radius:1px 1px 0 0"></div><div class="a" style="left:995px;top:393px;width:14px;height:11px;background:linear-gradient(160deg,#fcb238,#f89a48);"></div><div class="t" style="left:1016px;top:392px;font-size:12.5px">NC</div><div class="a" style="left:1009px;top:419px;width:6px;height:1px;background:repeating-linear-gradient(90deg,#a0a0a0 0 1px,transparent 1px 2px)"></div><div class="a" style="left:999px;top:415px;width:9px;height:9px;border:1px solid #8c8c8c;background:#fff"></div><div class="a" style="left:1001px;top:419px;width:5px;height:1px;background:#000"></div><div class="a" style="left:1003px;top:417px;width:1px;height:5px;background:#000"></div><div class="a" style="left:1014px;top:412px;width:5px;height:2px;background:#fcb238;border-radius:1px 1px 0 0"></div><div class="a" style="left:1014px;top:413px;width:14px;height:11px;background:linear-gradient(160deg,#fcb238,#f89a48);"></div><div class="t" style="left:1035px;top:412px;font-size:12.5px">Cut</div><div class="a" style="left:1009px;top:439px;width:6px;height:1px;background:repeating-linear-gradient(90deg,#a0a0a0 0 1px,transparent 1px 2px)"></div><div class="a" style="left:999px;top:435px;width:9px;height:9px;border:1px solid #8c8c8c;background:#fff"></div><div class="a" style="left:1001px;top:439px;width:5px;height:1px;background:#000"></div><div class="a" style="left:1003px;top:437px;width:1px;height:5px;background:#000"></div><div class="a" style="left:1014px;top:432px;width:5px;height:2px;background:#fcb238;border-radius:1px 1px 0 0"></div><div class="a" style="left:1014px;top:433px;width:14px;height:11px;background:linear-gradient(160deg,#fcb238,#f89a48);"></div><div class="t" style="left:1035px;top:432px;font-size:12.5px">da</div><div class="a" style="left:1009px;top:459px;width:6px;height:1px;background:repeating-linear-gradient(90deg,#a0a0a0 0 1px,transparent 1px 2px)"></div><div class="a" style="left:999px;top:455px;width:9px;height:9px;border:1px solid #8c8c8c;background:#fff"></div><div class="a" style="left:1001px;top:459px;width:5px;height:1px;background:#000"></div><div class="a" style="left:1003px;top:457px;width:1px;height:5px;background:#000"></div><div class="a" style="left:1014px;top:452px;width:5px;height:2px;background:#fcb238;border-radius:1px 1px 0 0"></div><div class="a" style="left:1014px;top:453px;width:14px;height:11px;background:linear-gradient(160deg,#fcb238,#f89a48);"></div><div class="t" style="left:1035px;top:452px;font-size:12.5px">dat</div><div class="a" style="left:1009px;top:479px;width:6px;height:1px;background:repeating-linear-gradient(90deg,#a0a0a0 0 1px,transparent 1px 2px)"></div><div class="a" style="left:999px;top:475px;width:9px;height:9px;border:1px solid #8c8c8c;background:#fff"></div><div class="a" style="left:1001px;top:479px;width:5px;height:1px;background:#000"></div><div class="a" style="left:1003px;top:477px;width:1px;height:5px;background:#000"></div><div class="a" style="left:1014px;top:472px;width:5px;height:2px;background:#fcb238;border-radius:1px 1px 0 0"></div><div class="a" style="left:1014px;top:473px;width:14px;height:11px;background:linear-gradient(160deg,#fcb238,#f89a48);"></div><div class="t" style="left:1035px;top:472px;font-size:12.5px">NC文件</div><div class="a" style="left:984px;top:499px;width:12px;height:1px;background:repeating-linear-gradient(90deg,#a0a0a0 0 1px,transparent 1px 2px)"></div><svg class="a" style="left:995px;top:491px" width="16" height="16"><path d="M0.5,0.5 H14.5 V9.5 L12.5,11.5 L10.5,11.5 V13.5 L8.5,13.5 L7,14.5 L5.5,13.5 L4,14.5 L2,13.5 L0.5,14 Z" fill="#fff" stroke="#000" stroke-width="1"/><rect x="2.5" y="2.5" width="6" height="5" fill="none" stroke="#00f"/><path d="M2,8.5 H10" stroke="#f00"/><path d="M3.5,8 L5.5,5 L7.5,8" fill="none" stroke="#f00"/><rect x="9.5" y="4.5" width="4" height="4" fill="none" stroke="#f0f"/><rect x="13" y="11" width="1" height="1" fill="#208080"/></svg><div class="t" style="left:1016px;top:492px;font-size:12.5px">1-E（对称的可以合并）.dxf</div><div class="a" style="left:984px;top:519px;width:12px;height:1px;background:repeating-linear-gradient(90deg,#a0a0a0 0 1px,transparent 1px 2px)"></div><svg class="a" style="left:995px;top:511px" width="16" height="16"><path d="M0.5,0.5 H14.5 V9.5 L12.5,11.5 L10.5,11.5 V13.5 L8.5,13.5 L7,14.5 L5.5,13.5 L4,14.5 L2,13.5 L0.5,14 Z" fill="#fff" stroke="#000" stroke-width="1"/><rect x="2.5" y="2.5" width="6" height="5" fill="none" stroke="#00f"/><path d="M2,8.5 H10" stroke="#f00"/><path d="M3.5,8 L5.5,5 L7.5,8" fill="none" stroke="#f00"/><rect x="9.5" y="4.5" width="4" height="4" fill="none" stroke="#f0f"/><rect x="13" y="11" width="1" height="1" fill="#208080"/></svg><div class="t" style="left:1016px;top:512px;font-size:12.5px">服装十字针眼自动认识.PLT</div><div class="a" style="left:957px;top:676px;width:263px;height:16px;background:#e8e8e8"></div><svg class="a" style="left:962px;top:679px" width="8" height="10"><path d="M5.5,0.5 L1,4.5 L5.5,8.5 Z" fill="#404040"/></svg><svg class="a" style="left:1209px;top:679px" width="8" height="10"><path d="M1.5,0.5 L6,4.5 L1.5,8.5 Z" fill="#404040"/></svg><div class="a" style="left:975px;top:676px;width:156px;height:15px;border:1px solid #9a9a9a;border-radius:2px;background:linear-gradient(#f6f6f6,#ececec 40%,#d4d4d4 60%,#cfcfcf)"></div><div class="a" style="left:1049px;top:680px;width:7px;height:7px;background:repeating-linear-gradient(90deg,#606060 0 1px,transparent 1px 3px)"></div><div class="a" style="left:8px;top:694px;width:1212px;height:234px;background:#f0f0f0"></div><div class="a" style="left:8px;top:697px;width:1212px;height:1px;background:#a0a0a0"></div><div class="a" style="left:8px;top:698px;width:1212px;height:1px;background:#fff"></div><div class="t" style="left:11px;top:700px;font-size:12px">服装工具栏</div><svg class="a" style="left:1208px;top:701px" width="10" height="10"><path d="M1.5,1.5 L8.5,8.5 M8.5,1.5 L1.5,8.5" stroke="#000" stroke-width="1.8"/></svg><div class="a" style="left:8px;top:714px;width:1212px;height:1px;background:#a0a0a0"></div><div class="a" style="left:8px;top:715px;width:1212px;height:1px;background:#fff"></div><div class="a" style="left:10px;top:726px;width:230px;height:182px;border:1px solid #a0a0a0;box-shadow:1px 1px 0 #fff inset, 1px 1px 0 #fff"></div><div class="t" style="left:17px;top:719px;padding:0 2px;background:#f0f0f0;font-size:12px">基本</div><div class="a" style="left:250px;top:726px;width:371px;height:181px;border:1px solid #a0a0a0;box-shadow:1px 1px 0 #fff inset, 1px 1px 0 #fff"></div><div class="t" style="left:257px;top:719px;padding:0 2px;background:#f0f0f0;font-size:12px">面料</div><div class="a" style="left:631px;top:726px;width:600px;height:181px;border:1px solid #a0a0a0;box-shadow:1px 1px 0 #fff inset, 1px 1px 0 #fff"></div><div class="t" style="left:53px;top:750px;font-size:12px;letter-spacing:0.5px;">机床分区<span style="font-family:'Liberation Mono',monospace;margin-left:1px">:</span></div><div class="a" style="left:113px;top:748px;width:113px;height:20px;background:#fff;border:1px solid;border-color:#828282 #ffffff #ffffff #828282"></div><div class="a" style="left:114px;top:749px;width:111px;height:18px;border:1px solid;border-color:#404040 #e3e3e3 #e3e3e3 #404040"></div><div class="t" style="left:117px;top:751px;font-size:12px">全区</div><div class="a" style="left:208px;top:750px;width:16px;height:16px;background:#f0f0f0;border:1px solid;border-color:#f0f0f0 #404040 #404040 #f0f0f0"></div><div class="a" style="left:209px;top:751px;width:14px;height:14px;border:1px solid;border-color:#fff #a0a0a0 #a0a0a0 #fff"></div><svg class="a" style="left:212px;top:756px" width="8" height="5"><path d="M0,0 H7 L3.5,4 Z" fill="#000"/></svg><div class="t" style="left:53px;top:786px;font-size:12px;letter-spacing:0.5px;">厚度处理<span style="font-family:'Liberation Mono',monospace;margin-left:1px">:</span></div><div class="a" style="left:113px;top:784px;width:113px;height:20px;background:#fff;border:1px solid;border-color:#828282 #ffffff #ffffff #828282"></div><div class="a" style="left:114px;top:785px;width:111px;height:18px;border:1px solid;border-color:#404040 #e3e3e3 #e3e3e3 #404040"></div><div class="t" style="left:117px;top:787px;font-size:12px">无</div><div class="a" style="left:208px;top:786px;width:16px;height:16px;background:#f0f0f0;border:1px solid;border-color:#f0f0f0 #404040 #404040 #f0f0f0"></div><div class="a" style="left:209px;top:787px;width:14px;height:14px;border:1px solid;border-color:#fff #a0a0a0 #a0a0a0 #fff"></div><svg class="a" style="left:212px;top:792px" width="8" height="5"><path d="M0,0 H7 L3.5,4 Z" fill="#000"/></svg><div class="t" style="left:53px;top:822px;font-size:12px;letter-spacing:0.5px;">面料层数<span style="font-family:'Liberation Mono',monospace;margin-left:1px">:</span></div><div class="a" style="left:113px;top:821px;width:95px;height:23px;background:#f0f0f0;border:1px solid;border-color:#a0a0a0 #ffffff #ffffff #a0a0a0"></div><div class="a" style="left:114px;top:822px;width:93px;height:21px;border:1px solid;border-color:#696969 #e3e3e3 #e3e3e3 #696969"></div><div class="t" style="left:113px;top:825px;width:95px;text-align:center;font-family:'Liberation Mono',monospace;font-size:12px;color:#808080">74</div><div class="a" style="left:209px;top:821px;width:17px;height:12px;background:#f0f0f0;border:1px solid;border-color:#e3e3e3 #696969 #696969 #e3e3e3"></div><div class="a" style="left:210px;top:822px;width:15px;height:10px;border:1px solid;border-color:#fff #a0a0a0 #a0a0a0 #fff"></div><svg class="a" style="left:215px;top:826px" width="5" height="3"><path d="M2,0h1v1h1v1h-3v-1h1z" fill="#a0a0a0"/></svg><div class="a" style="left:209px;top:833px;width:17px;height:12px;background:#f0f0f0;border:1px solid;border-color:#e3e3e3 #696969 #696969 #e3e3e3"></div><div class="a" style="left:210px;top:834px;width:15px;height:10px;border:1px solid;border-color:#fff #a0a0a0 #a0a0a0 #fff"></div><svg class="a" style="left:215px;top:838px" width="5" height="3"><path d="M1,0h3v1h-1v1h-1v-1h-1z" fill="#a0a0a0"/></svg><div class="t" style="left:286px;top:751px;font-size:12px;letter-spacing:0.5px;">面料类型<span style="font-family:'Liberation Mono',monospace;margin-left:1px">:</span></div><div class="a" style="left:345px;top:748px;width:152px;height:21px;background:#fff;border:1px solid;border-color:#828282 #ffffff #ffffff #828282"></div><div class="a" style="left:346px;top:749px;width:150px;height:19px;border:1px solid;border-color:#404040 #e3e3e3 #e3e3e3 #404040"></div><div class="t" style="left:349px;top:751px;font-size:12px">200</div><div class="a" style="left:479px;top:750px;width:16px;height:17px;background:#f0f0f0;border:1px solid;border-color:#f0f0f0 #404040 #404040 #f0f0f0"></div><div class="a" style="left:480px;top:751px;width:14px;height:15px;border:1px solid;border-color:#fff #a0a0a0 #a0a0a0 #fff"></div><svg class="a" style="left:483px;top:756px" width="8" height="5"><path d="M0,0 H7 L3.5,4 Z" fill="#000"/></svg><div class="a" style="left:502px;top:743px;width:49px;height:29px;background:#f0f0f0;border:1px solid;border-color:#fff #696969 #696969 #fff"></div><div class="a" style="left:503px;top:744px;width:47px;height:27px;border:1px solid;border-color:#e3e3e3 #a0a0a0 #a0a0a0 #e3e3e3"></div><div class="t" style="left:502px;top:750px;width:49px;text-align:center;font-size:12px">增加</div><div class="a" style="left:558px;top:743px;width:50px;height:29px;background:#f0f0f0;border:1px solid;border-color:#fff #696969 #696969 #fff"></div><div class="a" style="left:559px;top:744px;width:48px;height:27px;border:1px solid;border-color:#e3e3e3 #a0a0a0 #a0a0a0 #e3e3e3"></div><div class="t" style="left:558px;top:750px;width:50px;text-align:center;font-size:12px">删除</div><div class="t" style="left:275px;top:790px;font-size:12px;font-family:'Liberation Mono',monospace;letter-spacing:0px;">X间距(mm):</div><div class="a" style="left:346px;top:785px;width:66px;height:23px;background:#fff;border:1px solid;border-color:#a0a0a0 #ffffff #ffffff #a0a0a0"></div><div class="a" style="left:347px;top:786px;width:64px;height:21px;border:1px solid;border-color:#696969 #e3e3e3 #e3e3e3 #696969"></div><div class="t" style="left:346px;top:789px;width:66px;text-align:center;font-family:'Liberation Mono',monospace;font-size:12px;color:#000">198.3</div><div class="a" style="left:414px;top:785px;width:17px;height:12px;background:#f0f0f0;border:1px solid;border-color:#e3e3e3 #696969 #696969 #e3e3e3"></div><div class="a" style="left:415px;top:786px;width:15px;height:10px;border:1px solid;border-color:#fff #a0a0a0 #a0a0a0 #fff"></div><svg class="a" style="left:420px;top:790px" width="5" height="3"><path d="M2,0h1v1h1v1h-3v-1h1z" fill="#000"/></svg><div class="a" style="left:414px;top:797px;width:17px;height:12px;background:#f0f0f0;border:1px solid;border-color:#e3e3e3 #696969 #696969 #e3e3e3"></div><div class="a" style="left:415px;top:798px;width:15px;height:10px;border:1px solid;border-color:#fff #a0a0a0 #a0a0a0 #fff"></div><svg class="a" style="left:420px;top:802px" width="5" height="3"><path d="M1,0h3v1h-1v1h-1v-1h-1z" fill="#000"/></svg><div class="t" style="left:453px;top:790px;font-size:12px;font-family:'Liberation Mono',monospace;letter-spacing:0px;">Y间距(mm):</div><div class="a" style="left:523px;top:785px;width:66px;height:23px;background:#fff;border:1px solid;border-color:#a0a0a0 #ffffff #ffffff #a0a0a0"></div><div class="a" style="left:524px;top:786px;width:64px;height:21px;border:1px solid;border-color:#696969 #e3e3e3 #e3e3e3 #696969"></div><div class="t" style="left:523px;top:789px;width:66px;text-align:center;font-family:'Liberation Mono',monospace;font-size:12px;color:#000">191.4</div><div class="a" style="left:591px;top:785px;width:17px;height:12px;background:#f0f0f0;border:1px solid;border-color:#e3e3e3 #696969 #696969 #e3e3e3"></div><div class="a" style="left:592px;top:786px;width:15px;height:10px;border:1px solid;border-color:#fff #a0a0a0 #a0a0a0 #fff"></div><svg class="a" style="left:597px;top:790px" width="5" height="3"><path d="M2,0h1v1h1v1h-3v-1h1z" fill="#000"/></svg><div class="a" style="left:591px;top:797px;width:17px;height:12px;background:#f0f0f0;border:1px solid;border-color:#e3e3e3 #696969 #696969 #e3e3e3"></div><div class="a" style="left:592px;top:798px;width:15px;height:10px;border:1px solid;border-color:#fff #a0a0a0 #a0a0a0 #fff"></div><svg class="a" style="left:597px;top:802px" width="5" height="3"><path d="M1,0h3v1h-1v1h-1v-1h-1z" fill="#000"/></svg><div class="t" style="left:275px;top:825px;font-size:12px;font-family:'Liberation Mono',monospace;letter-spacing:0px;">X偏移(mm):</div><div class="a" style="left:346px;top:821px;width:66px;height:23px;background:#fff;border:1px solid;border-color:#a0a0a0 #ffffff #ffffff #a0a0a0"></div><div class="a" style="left:347px;top:822px;width:64px;height:21px;border:1px solid;border-color:#696969 #e3e3e3 #e3e3e3 #696969"></div><div class="t" style="left:346px;top:825px;width:66px;text-align:center;font-family:'Liberation Mono',monospace;font-size:12px;color:#000">0</div><div class="a" style="left:414px;top:821px;width:17px;height:12px;background:#f0f0f0;border:1px solid;border-color:#e3e3e3 #696969 #696969 #e3e3e3"></div><div class="a" style="left:415px;top:822px;width:15px;height:10px;border:1px solid;border-color:#fff #a0a0a0 #a0a0a0 #fff"></div><svg class="a" style="left:420px;top:826px" width="5" height="3"><path d="M2,0h1v1h1v1h-3v-1h1z" fill="#000"/></svg><div class="a" style="left:414px;top:833px;width:17px;height:12px;background:#f0f0f0;border:1px solid;border-color:#e3e3e3 #696969 #696969 #e3e3e3"></div><div class="a" style="left:415px;top:834px;width:15px;height:10px;border:1px solid;border-color:#fff #a0a0a0 #a0a0a0 #fff"></div><svg class="a" style="left:420px;top:838px" width="5" height="3"><path d="M1,0h3v1h-1v1h-1v-1h-1z" fill="#000"/></svg><div class="t" style="left:453px;top:825px;font-size:12px;font-family:'Liberation Mono',monospace;letter-spacing:0px;">Y偏移(mm):</div><div class="a" style="left:523px;top:821px;width:66px;height:23px;background:#fff;border:1px solid;border-color:#a0a0a0 #ffffff #ffffff #a0a0a0"></div><div class="a" style="left:524px;top:822px;width:64px;height:21px;border:1px solid;border-color:#696969 #e3e3e3 #e3e3e3 #696969"></div><div class="t" style="left:523px;top:825px;width:66px;text-align:center;font-family:'Liberation Mono',monospace;font-size:12px;color:#000">0</div><div class="a" style="left:591px;top:821px;width:17px;height:12px;background:#f0f0f0;border:1px solid;border-color:#e3e3e3 #696969 #696969 #e3e3e3"></div><div class="a" style="left:592px;top:822px;width:15px;height:10px;border:1px solid;border-color:#fff #a0a0a0 #a0a0a0 #fff"></div><svg class="a" style="left:597px;top:826px" width="5" height="3"><path d="M2,0h1v1h1v1h-3v-1h1z" fill="#000"/></svg><div class="a" style="left:591px;top:833px;width:17px;height:12px;background:#f0f0f0;border:1px solid;border-color:#e3e3e3 #696969 #696969 #e3e3e3"></div><div class="a" style="left:592px;top:834px;width:15px;height:10px;border:1px solid;border-color:#fff #a0a0a0 #a0a0a0 #fff"></div><svg class="a" style="left:597px;top:838px" width="5" height="3"><path d="M1,0h3v1h-1v1h-1v-1h-1z" fill="#000"/></svg><div class="t" style="left:283px;top:861px;font-size:12px;font-family:'Liberation Mono',monospace;letter-spacing:0px;">厚度(mm):</div><div class="a" style="left:346px;top:857px;width:66px;height:23px;background:#fff;border:1px solid;border-color:#a0a0a0 #ffffff #ffffff #a0a0a0"></div><div class="a" style="left:347px;top:858px;width:64px;height:21px;border:1px solid;border-color:#696969 #e3e3e3 #e3e3e3 #696969"></div><div class="t" style="left:346px;top:861px;width:66px;text-align:center;font-family:'Liberation Mono',monospace;font-size:12px;color:#000">0</div><div class="a" style="left:414px;top:857px;width:17px;height:12px;background:#f0f0f0;border:1px solid;border-color:#e3e3e3 #696969 #696969 #e3e3e3"></div><div class="a" style="left:415px;top:858px;width:15px;height:10px;border:1px solid;border-color:#fff #a0a0a0 #a0a0a0 #fff"></div><svg class="a" style="left:420px;top:862px" width="5" height="3"><path d="M2,0h1v1h1v1h-3v-1h1z" fill="#000"/></svg><div class="a" style="left:414px;top:869px;width:17px;height:12px;background:#f0f0f0;border:1px solid;border-color:#e3e3e3 #696969 #696969 #e3e3e3"></div><div class="a" style="left:415px;top:870px;width:15px;height:10px;border:1px solid;border-color:#fff #a0a0a0 #a0a0a0 #fff"></div><svg class="a" style="left:420px;top:874px" width="5" height="3"><path d="M1,0h3v1h-1v1h-1v-1h-1z" fill="#000"/></svg><div class="t" style="left:11px;top:913px;font-size:12px">就绪</div><div class="a" style="left:927px;top:910px;width:90px;height:18px;border:1px solid;border-color:#a0a0a0 #fff #fff #a0a0a0"></div><div class="t" style="left:929px;top:913px;font-size:12px;color:#6d6d6d">1960.7573</div><div class="a" style="left:1019px;top:910px;width:91px;height:18px;border:1px solid;border-color:#a0a0a0 #fff #fff #a0a0a0"></div><div class="t" style="left:1021px;top:913px;font-size:12px;color:#6d6d6d">1239.2427</div><div class="a" style="left:1112px;top:910px;width:27px;height:18px;border:1px solid;border-color:#a0a0a0 #fff #fff #a0a0a0"></div><div class="t" style="left:1114px;top:913px;font-size:12px;color:#6d6d6d">CAP</div><div class="a" style="left:1140px;top:910px;width:29px;height:18px;border:1px solid;border-color:#a0a0a0 #fff #fff #a0a0a0"></div><div class="t" style="left:1142px;top:913px;font-size:12px;color:#000">NUM</div><div class="a" style="left:1171px;top:910px;width:32px;height:18px;border:1px solid;border-color:#a0a0a0 #fff #fff #a0a0a0"></div><div class="t" style="left:1173px;top:913px;font-size:12px;color:#6d6d6d">SCRL</div><svg class="a" style="left:1205px;top:913px" width="15" height="15"><path d="M14,2 L2,14 M14,6 L6,14 M14,10 L10,14" stroke="#a0a0a0" stroke-width="1"/><path d="M14,3 L3,14 M14,7 L7,14 M14,11 L11,14" stroke="#fff" stroke-width="1"/></svg><div class="a" style="left:0;top:28px;width:8px;height:908px;background:linear-gradient(#b9d1ea 0px,#c0d6ec 250px,#7a9cc8 254px,#7fa2cc 380px,#2a3a40 392px,#1f3030 470px,#2a3c3c 560px,#4a6888 585px,#3c5a78 650px,#4a6a8a 760px,#3f5878 900px,#3b5070 936px)"></div><div class="a" style="left:0;top:28px;width:1px;height:908px;background:#101820"></div><div class="a" style="left:1px;top:28px;width:1px;height:906px;background:rgba(255,255,255,0.75)"></div><div class="a" style="left:6px;top:28px;width:1px;height:901px;background:rgba(240,248,255,0.7)"></div><div class="a" style="left:7px;top:29px;width:1px;height:900px;background:#4a5a6e"></div><div class="a" style="left:1220px;top:28px;width:8px;height:908px;background:linear-gradient(#b9d1ea 0px,#c0d6ec 250px,#86a8d4 254px,#8aaad8 355px,#1f2c34 372px,#1c2830 540px,#4a6890 560px,#1f2c34 575px,#5a7aa0 600px,#203040 630px,#5a7aa0 660px,#5070a0 936px)"></div><div class="a" style="left:1227px;top:0px;width:1px;height:936px;background:#101820"></div><div class="a" style="left:1226px;top:6px;width:1px;height:928px;background:rgba(255,255,255,0.75)"></div><div class="a" style="left:1221px;top:28px;width:1px;height:901px;background:rgba(240,248,255,0.7)"></div><div class="a" style="left:1220px;top:29px;width:1px;height:900px;background:#4a5a6e"></div><div class="a" style="left:0;top:928px;width:1228px;height:8px;background:linear-gradient(90deg,#3b5070,#405878 40%,#3b5070)"></div><div class="a" style="left:7px;top:928px;width:1214px;height:1px;background:#3a4658"></div><div class="a" style="left:6px;top:929px;width:1216px;height:1px;background:rgba(240,248,255,0.6)"></div><div class="a" style="left:1px;top:934px;width:1226px;height:1px;background:rgba(255,255,255,0.7)"></div><div class="a" style="left:0;top:935px;width:1228px;height:1px;background:#101820"></div></body></html>
